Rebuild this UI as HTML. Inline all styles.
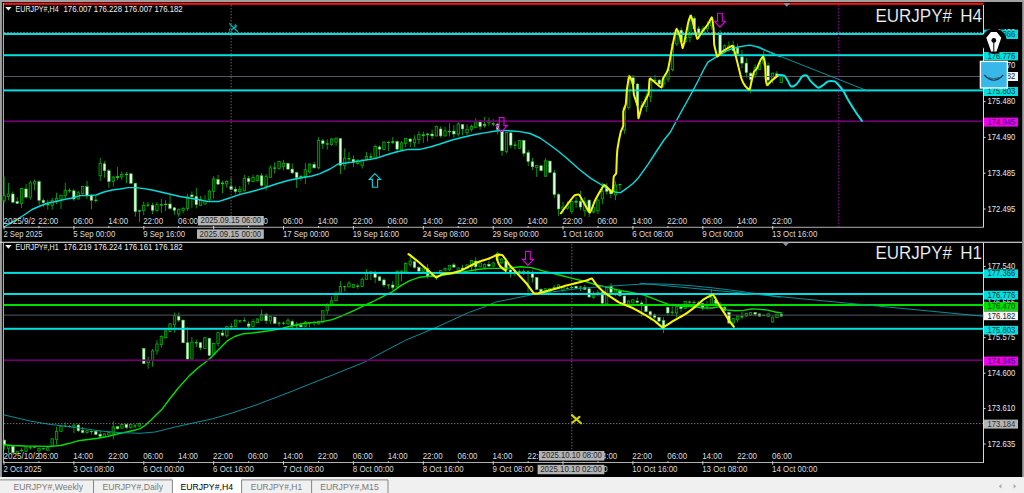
<!DOCTYPE html>
<html><head><meta charset="utf-8"><title>EURJPY# charts</title>
<style>
html,body{margin:0;padding:0;background:#000;width:1024px;height:493px;overflow:hidden}
svg{display:block;font-family:"Liberation Sans", sans-serif;}
text{white-space:pre}
</style></head><body>
<svg width="1024" height="493" viewBox="0 0 1024 493">
<rect x="0" y="0" width="1024" height="493" fill="#000"/>
<rect x="0" y="0" width="1024" height="2" fill="#a0a0a0"/>
<rect x="0" y="0" width="1.9" height="478" fill="#a0a0a0"/>
<rect x="1022.2" y="0" width="2" height="478" fill="#a0a0a0"/>
<rect x="2.9" y="3" width="0.9" height="224.6" fill="#d8d8d8"/>
<rect x="2.9" y="243" width="0.9" height="220" fill="#d8d8d8"/>
<rect x="0" y="241.7" width="1022" height="1.2" fill="#d0d0d0"/>
<rect x="4" y="2.8" width="979.5" height="2" fill="#ff1010"/>
<rect x="3.70" y="176.41" width="0.9" height="26.41" fill="#00a800"/>
<rect x="2.95" y="195.89" width="2.4" height="4.40" fill="#002600" stroke="#00b400" stroke-width="0.75"/>
<rect x="7.97" y="182.94" width="0.9" height="17.35" fill="#00a800"/>
<rect x="7.22" y="194.01" width="2.4" height="2.51" fill="#002600" stroke="#00b400" stroke-width="0.75"/>
<rect x="12.38" y="191.49" width="0.9" height="11.95" fill="#00a800"/>
<rect x="11.53" y="194.01" width="2.6" height="8.17" fill="#dcffdc" stroke="#38c838" stroke-width="0.5"/>
<rect x="16.78" y="197.15" width="0.9" height="6.92" fill="#00a800"/>
<rect x="15.93" y="201.55" width="2.6" height="1.89" fill="#dcffdc" stroke="#38c838" stroke-width="0.5"/>
<rect x="21.18" y="187.72" width="0.9" height="20.12" fill="#00a800"/>
<rect x="20.43" y="188.35" width="2.4" height="15.09" fill="#002600" stroke="#00b400" stroke-width="0.75"/>
<rect x="25.58" y="183.95" width="0.9" height="14.46" fill="#00a800"/>
<rect x="24.73" y="188.98" width="2.6" height="8.17" fill="#dcffdc" stroke="#38c838" stroke-width="0.5"/>
<rect x="29.85" y="180.81" width="0.9" height="18.86" fill="#00a800"/>
<rect x="29.10" y="182.94" width="2.4" height="14.21" fill="#002600" stroke="#00b400" stroke-width="0.75"/>
<rect x="34.13" y="179.55" width="0.9" height="10.69" fill="#00a800"/>
<rect x="33.38" y="181.69" width="2.4" height="2.26" fill="#002600" stroke="#00b400" stroke-width="0.75"/>
<rect x="38.65" y="180.18" width="0.9" height="24.52" fill="#00a800"/>
<rect x="37.80" y="181.69" width="2.6" height="18.61" fill="#dcffdc" stroke="#38c838" stroke-width="0.5"/>
<rect x="42.93" y="198.41" width="0.9" height="8.80" fill="#00a800"/>
<rect x="42.08" y="200.30" width="2.6" height="2.26" fill="#dcffdc" stroke="#38c838" stroke-width="0.5"/>
<rect x="47.33" y="199.67" width="0.9" height="10.06" fill="#00a800"/>
<rect x="46.28" y="203.44" width="3" height="1.89" fill="#20d020"/>
<rect x="51.73" y="197.78" width="0.9" height="11.95" fill="#00a800"/>
<rect x="50.98" y="200.30" width="2.4" height="5.03" fill="#002600" stroke="#00b400" stroke-width="0.75"/>
<rect x="56.13" y="192.75" width="0.9" height="11.32" fill="#00a800"/>
<rect x="55.38" y="198.41" width="2.4" height="2.51" fill="#002600" stroke="#00b400" stroke-width="0.75"/>
<rect x="60.53" y="194.64" width="0.9" height="14.46" fill="#00a800"/>
<rect x="59.78" y="195.27" width="2.4" height="3.77" fill="#002600" stroke="#00b400" stroke-width="0.75"/>
<rect x="64.81" y="182.94" width="0.9" height="15.47" fill="#00a800"/>
<rect x="64.06" y="190.24" width="2.4" height="5.66" fill="#002600" stroke="#00b400" stroke-width="0.75"/>
<rect x="69.08" y="188.35" width="0.9" height="4.40" fill="#00a800"/>
<rect x="68.03" y="190.24" width="3" height="1.01" fill="#20d020"/>
<rect x="73.36" y="188.98" width="0.9" height="11.95" fill="#00a800"/>
<rect x="72.51" y="190.87" width="2.6" height="8.17" fill="#dcffdc" stroke="#38c838" stroke-width="0.5"/>
<rect x="77.76" y="190.87" width="0.9" height="8.80" fill="#00a800"/>
<rect x="77.01" y="192.75" width="2.4" height="6.29" fill="#002600" stroke="#00b400" stroke-width="0.75"/>
<rect x="82.16" y="185.84" width="0.9" height="8.80" fill="#00a800"/>
<rect x="81.41" y="186.46" width="2.4" height="6.92" fill="#002600" stroke="#00b400" stroke-width="0.75"/>
<rect x="86.56" y="180.81" width="0.9" height="18.23" fill="#00a800"/>
<rect x="85.71" y="186.72" width="2.6" height="8.55" fill="#dcffdc" stroke="#38c838" stroke-width="0.5"/>
<rect x="90.96" y="194.01" width="0.9" height="15.09" fill="#00a800"/>
<rect x="90.11" y="195.89" width="2.6" height="4.40" fill="#dcffdc" stroke="#38c838" stroke-width="0.5"/>
<rect x="95.36" y="195.89" width="0.9" height="6.92" fill="#00a800"/>
<rect x="94.31" y="199.67" width="3" height="1.26" fill="#20d020"/>
<rect x="99.76" y="157.80" width="0.9" height="23.01" fill="#00a800"/>
<rect x="99.01" y="163.20" width="2.4" height="12.57" fill="#002600" stroke="#00b400" stroke-width="0.75"/>
<rect x="104.04" y="161.32" width="0.9" height="16.35" fill="#00a800"/>
<rect x="103.19" y="163.83" width="2.6" height="6.92" fill="#dcffdc" stroke="#38c838" stroke-width="0.5"/>
<rect x="108.44" y="168.86" width="0.9" height="18.86" fill="#00a800"/>
<rect x="107.59" y="170.75" width="2.6" height="10.69" fill="#dcffdc" stroke="#38c838" stroke-width="0.5"/>
<rect x="112.84" y="175.78" width="0.9" height="10.69" fill="#00a800"/>
<rect x="112.09" y="177.03" width="2.4" height="4.40" fill="#002600" stroke="#00b400" stroke-width="0.75"/>
<rect x="117.12" y="166.97" width="0.9" height="13.20" fill="#00a800"/>
<rect x="116.07" y="176.15" width="3" height="1.76" fill="#20d020"/>
<rect x="121.27" y="171.38" width="0.9" height="8.80" fill="#00a800"/>
<rect x="120.52" y="174.52" width="2.4" height="2.51" fill="#002600" stroke="#00b400" stroke-width="0.75"/>
<rect x="126.06" y="171.95" width="0.9" height="11.32" fill="#00a800"/>
<rect x="125.01" y="173.83" width="3" height="1.26" fill="#20d020"/>
<rect x="130.47" y="172.57" width="0.9" height="11.32" fill="#00a800"/>
<rect x="129.62" y="173.83" width="2.6" height="9.43" fill="#dcffdc" stroke="#38c838" stroke-width="0.5"/>
<rect x="134.87" y="182.63" width="0.9" height="33.95" fill="#00a800"/>
<rect x="134.02" y="183.26" width="2.6" height="28.29" fill="#dcffdc" stroke="#38c838" stroke-width="0.5"/>
<rect x="139.02" y="209.67" width="0.9" height="12.32" fill="#00a800"/>
<rect x="137.97" y="210.30" width="3" height="1.26" fill="#20d020"/>
<rect x="143.29" y="201.49" width="0.9" height="13.83" fill="#00a800"/>
<rect x="142.54" y="205.27" width="2.4" height="5.03" fill="#002600" stroke="#00b400" stroke-width="0.75"/>
<rect x="147.44" y="202.12" width="0.9" height="5.03" fill="#00a800"/>
<rect x="146.39" y="204.64" width="3" height="1.00" fill="#20d020"/>
<rect x="152.09" y="202.75" width="0.9" height="11.32" fill="#00a800"/>
<rect x="151.24" y="205.27" width="2.6" height="5.03" fill="#dcffdc" stroke="#38c838" stroke-width="0.5"/>
<rect x="156.49" y="202.12" width="0.9" height="10.06" fill="#00a800"/>
<rect x="155.74" y="204.64" width="2.4" height="5.66" fill="#002600" stroke="#00b400" stroke-width="0.75"/>
<rect x="160.89" y="198.98" width="0.9" height="13.83" fill="#00a800"/>
<rect x="159.84" y="204.26" width="3" height="1.26" fill="#20d020"/>
<rect x="165.17" y="200.24" width="0.9" height="10.69" fill="#00a800"/>
<rect x="164.12" y="203.76" width="3" height="1.26" fill="#20d020"/>
<rect x="169.57" y="193.95" width="0.9" height="15.72" fill="#00a800"/>
<rect x="168.72" y="204.01" width="2.6" height="4.40" fill="#dcffdc" stroke="#38c838" stroke-width="0.5"/>
<rect x="173.97" y="207.15" width="0.9" height="7.54" fill="#00a800"/>
<rect x="173.12" y="207.78" width="2.6" height="2.51" fill="#dcffdc" stroke="#38c838" stroke-width="0.5"/>
<rect x="178.25" y="208.41" width="0.9" height="8.17" fill="#00a800"/>
<rect x="177.50" y="209.67" width="2.4" height="4.40" fill="#002600" stroke="#00b400" stroke-width="0.75"/>
<rect x="182.65" y="207.15" width="0.9" height="6.29" fill="#00a800"/>
<rect x="181.90" y="208.41" width="2.4" height="1.89" fill="#002600" stroke="#00b400" stroke-width="0.75"/>
<rect x="187.05" y="193.95" width="0.9" height="16.97" fill="#00a800"/>
<rect x="186.30" y="197.09" width="2.4" height="11.32" fill="#002600" stroke="#00b400" stroke-width="0.75"/>
<rect x="191.45" y="191.43" width="0.9" height="16.35" fill="#00a800"/>
<rect x="190.60" y="194.96" width="2.6" height="1.76" fill="#dcffdc" stroke="#38c838" stroke-width="0.5"/>
<rect x="195.85" y="187.91" width="0.9" height="20.50" fill="#00a800"/>
<rect x="195.00" y="196.46" width="2.6" height="8.17" fill="#dcffdc" stroke="#38c838" stroke-width="0.5"/>
<rect x="200.12" y="195.84" width="0.9" height="10.06" fill="#00a800"/>
<rect x="199.37" y="199.61" width="2.4" height="5.66" fill="#002600" stroke="#00b400" stroke-width="0.75"/>
<rect x="204.53" y="195.21" width="0.9" height="9.43" fill="#00a800"/>
<rect x="203.78" y="200.87" width="2.4" height="3.14" fill="#002600" stroke="#00b400" stroke-width="0.75"/>
<rect x="208.93" y="189.55" width="0.9" height="11.32" fill="#00a800"/>
<rect x="208.18" y="191.18" width="2.4" height="8.42" fill="#002600" stroke="#00b400" stroke-width="0.75"/>
<rect x="213.20" y="176.09" width="0.9" height="22.26" fill="#00a800"/>
<rect x="212.45" y="178.86" width="2.4" height="12.57" fill="#002600" stroke="#00b400" stroke-width="0.75"/>
<rect x="217.60" y="174.84" width="0.9" height="10.31" fill="#00a800"/>
<rect x="216.75" y="179.49" width="2.6" height="4.65" fill="#dcffdc" stroke="#38c838" stroke-width="0.5"/>
<rect x="222.00" y="180.75" width="0.9" height="12.57" fill="#00a800"/>
<rect x="220.95" y="182.63" width="3" height="1.51" fill="#20d020"/>
<rect x="226.28" y="180.12" width="0.9" height="7.54" fill="#00a800"/>
<rect x="225.53" y="181.38" width="2.4" height="2.51" fill="#002600" stroke="#00b400" stroke-width="0.75"/>
<rect x="230.68" y="177.60" width="0.9" height="12.57" fill="#00a800"/>
<rect x="229.83" y="186.66" width="2.6" height="2.89" fill="#dcffdc" stroke="#38c838" stroke-width="0.5"/>
<rect x="234.95" y="186.41" width="0.9" height="7.80" fill="#00a800"/>
<rect x="234.10" y="189.17" width="2.6" height="2.26" fill="#dcffdc" stroke="#38c838" stroke-width="0.5"/>
<rect x="239.36" y="185.78" width="0.9" height="8.42" fill="#00a800"/>
<rect x="238.61" y="189.17" width="2.4" height="2.51" fill="#002600" stroke="#00b400" stroke-width="0.75"/>
<rect x="243.88" y="174.84" width="0.9" height="16.60" fill="#00a800"/>
<rect x="243.13" y="178.23" width="2.4" height="12.57" fill="#002600" stroke="#00b400" stroke-width="0.75"/>
<rect x="248.16" y="176.09" width="0.9" height="8.42" fill="#00a800"/>
<rect x="247.31" y="178.61" width="2.6" height="3.02" fill="#dcffdc" stroke="#38c838" stroke-width="0.5"/>
<rect x="252.58" y="174.75" width="0.9" height="7.54" fill="#00a800"/>
<rect x="251.83" y="177.52" width="2.4" height="4.15" fill="#002600" stroke="#00b400" stroke-width="0.75"/>
<rect x="256.98" y="174.75" width="0.9" height="6.92" fill="#00a800"/>
<rect x="256.23" y="175.76" width="2.4" height="4.65" fill="#002600" stroke="#00b400" stroke-width="0.75"/>
<rect x="261.13" y="172.87" width="0.9" height="13.83" fill="#00a800"/>
<rect x="260.28" y="175.76" width="2.6" height="9.68" fill="#dcffdc" stroke="#38c838" stroke-width="0.5"/>
<rect x="265.66" y="174.12" width="0.9" height="16.35" fill="#00a800"/>
<rect x="264.91" y="176.64" width="2.4" height="9.43" fill="#002600" stroke="#00b400" stroke-width="0.75"/>
<rect x="269.93" y="165.32" width="0.9" height="12.57" fill="#00a800"/>
<rect x="269.18" y="167.84" width="2.4" height="9.43" fill="#002600" stroke="#00b400" stroke-width="0.75"/>
<rect x="274.21" y="162.18" width="0.9" height="11.32" fill="#00a800"/>
<rect x="273.16" y="167.46" width="3" height="1.26" fill="#20d020"/>
<rect x="278.61" y="160.92" width="0.9" height="8.80" fill="#00a800"/>
<rect x="277.86" y="161.55" width="2.4" height="6.92" fill="#002600" stroke="#00b400" stroke-width="0.75"/>
<rect x="283.01" y="159.91" width="0.9" height="10.44" fill="#00a800"/>
<rect x="282.26" y="163.18" width="2.4" height="3.39" fill="#002600" stroke="#00b400" stroke-width="0.75"/>
<rect x="287.53" y="162.81" width="0.9" height="6.92" fill="#00a800"/>
<rect x="286.68" y="163.43" width="2.6" height="5.66" fill="#dcffdc" stroke="#38c838" stroke-width="0.5"/>
<rect x="291.81" y="163.43" width="0.9" height="10.69" fill="#00a800"/>
<rect x="290.96" y="169.09" width="2.6" height="3.77" fill="#dcffdc" stroke="#38c838" stroke-width="0.5"/>
<rect x="296.21" y="171.61" width="0.9" height="16.35" fill="#00a800"/>
<rect x="295.36" y="172.49" width="2.6" height="5.03" fill="#dcffdc" stroke="#38c838" stroke-width="0.5"/>
<rect x="300.49" y="174.75" width="0.9" height="6.29" fill="#00a800"/>
<rect x="299.44" y="176.01" width="3" height="1.51" fill="#20d020"/>
<rect x="304.89" y="162.81" width="0.9" height="21.38" fill="#00a800"/>
<rect x="304.14" y="169.72" width="2.4" height="6.92" fill="#002600" stroke="#00b400" stroke-width="0.75"/>
<rect x="309.16" y="163.43" width="0.9" height="10.06" fill="#00a800"/>
<rect x="308.41" y="164.06" width="2.4" height="7.92" fill="#002600" stroke="#00b400" stroke-width="0.75"/>
<rect x="313.69" y="161.93" width="0.9" height="6.54" fill="#00a800"/>
<rect x="312.84" y="164.44" width="2.6" height="3.39" fill="#dcffdc" stroke="#38c838" stroke-width="0.5"/>
<rect x="318.09" y="137.28" width="0.9" height="31.81" fill="#00a800"/>
<rect x="317.34" y="140.55" width="2.4" height="27.29" fill="#002600" stroke="#00b400" stroke-width="0.75"/>
<rect x="322.36" y="138.92" width="0.9" height="10.06" fill="#00a800"/>
<rect x="321.51" y="140.80" width="2.6" height="2.77" fill="#dcffdc" stroke="#38c838" stroke-width="0.5"/>
<rect x="326.77" y="139.29" width="0.9" height="10.31" fill="#00a800"/>
<rect x="325.72" y="143.32" width="3" height="1.26" fill="#20d020"/>
<rect x="331.17" y="138.04" width="0.9" height="7.80" fill="#00a800"/>
<rect x="330.42" y="138.92" width="2.4" height="5.66" fill="#002600" stroke="#00b400" stroke-width="0.75"/>
<rect x="335.57" y="137.28" width="0.9" height="8.55" fill="#00a800"/>
<rect x="334.82" y="138.29" width="2.4" height="3.77" fill="#002600" stroke="#00b400" stroke-width="0.75"/>
<rect x="339.97" y="138.04" width="0.9" height="36.09" fill="#00a800"/>
<rect x="339.12" y="138.54" width="2.6" height="26.78" fill="#dcffdc" stroke="#38c838" stroke-width="0.5"/>
<rect x="344.24" y="148.35" width="0.9" height="21.38" fill="#00a800"/>
<rect x="343.49" y="158.15" width="2.4" height="7.17" fill="#002600" stroke="#00b400" stroke-width="0.75"/>
<rect x="348.52" y="152.12" width="0.9" height="10.06" fill="#00a800"/>
<rect x="347.47" y="158.15" width="3" height="1.26" fill="#20d020"/>
<rect x="352.92" y="155.26" width="0.9" height="11.95" fill="#00a800"/>
<rect x="352.07" y="159.41" width="2.6" height="2.77" fill="#dcffdc" stroke="#38c838" stroke-width="0.5"/>
<rect x="357.32" y="159.03" width="0.9" height="5.66" fill="#00a800"/>
<rect x="356.57" y="160.29" width="2.4" height="3.14" fill="#002600" stroke="#00b400" stroke-width="0.75"/>
<rect x="361.72" y="159.03" width="0.9" height="9.43" fill="#00a800"/>
<rect x="360.97" y="159.91" width="2.4" height="5.41" fill="#002600" stroke="#00b400" stroke-width="0.75"/>
<rect x="366.00" y="151.87" width="0.9" height="8.05" fill="#00a800"/>
<rect x="365.25" y="156.52" width="2.4" height="2.51" fill="#002600" stroke="#00b400" stroke-width="0.75"/>
<rect x="370.40" y="152.75" width="0.9" height="7.54" fill="#00a800"/>
<rect x="369.35" y="156.14" width="3" height="1.63" fill="#20d020"/>
<rect x="374.69" y="144.69" width="0.9" height="13.20" fill="#00a800"/>
<rect x="373.94" y="146.58" width="2.4" height="10.69" fill="#002600" stroke="#00b400" stroke-width="0.75"/>
<rect x="379.09" y="145.32" width="0.9" height="11.32" fill="#00a800"/>
<rect x="378.24" y="146.96" width="2.6" height="2.14" fill="#dcffdc" stroke="#38c838" stroke-width="0.5"/>
<rect x="383.50" y="141.17" width="0.9" height="9.18" fill="#00a800"/>
<rect x="382.75" y="142.18" width="2.4" height="7.29" fill="#002600" stroke="#00b400" stroke-width="0.75"/>
<rect x="387.90" y="140.92" width="0.9" height="10.06" fill="#00a800"/>
<rect x="386.85" y="141.93" width="3" height="1.00" fill="#20d020"/>
<rect x="392.30" y="137.15" width="0.9" height="6.92" fill="#00a800"/>
<rect x="391.25" y="141.17" width="3" height="1.63" fill="#20d020"/>
<rect x="396.70" y="140.29" width="0.9" height="13.20" fill="#00a800"/>
<rect x="395.85" y="141.55" width="2.6" height="7.54" fill="#dcffdc" stroke="#38c838" stroke-width="0.5"/>
<rect x="401.10" y="141.17" width="0.9" height="9.81" fill="#00a800"/>
<rect x="400.35" y="142.81" width="2.4" height="6.92" fill="#002600" stroke="#00b400" stroke-width="0.75"/>
<rect x="405.25" y="137.78" width="0.9" height="9.43" fill="#00a800"/>
<rect x="404.50" y="138.41" width="2.4" height="5.03" fill="#002600" stroke="#00b400" stroke-width="0.75"/>
<rect x="409.77" y="137.78" width="0.9" height="9.43" fill="#00a800"/>
<rect x="408.92" y="139.03" width="2.6" height="2.51" fill="#dcffdc" stroke="#38c838" stroke-width="0.5"/>
<rect x="414.05" y="135.26" width="0.9" height="11.95" fill="#00a800"/>
<rect x="413.30" y="139.03" width="2.4" height="3.77" fill="#002600" stroke="#00b400" stroke-width="0.75"/>
<rect x="418.45" y="131.49" width="0.9" height="12.57" fill="#00a800"/>
<rect x="417.70" y="134.38" width="2.4" height="5.28" fill="#002600" stroke="#00b400" stroke-width="0.75"/>
<rect x="422.85" y="131.49" width="0.9" height="11.32" fill="#00a800"/>
<rect x="421.80" y="134.38" width="3" height="1.51" fill="#20d020"/>
<rect x="427.13" y="132.75" width="0.9" height="8.80" fill="#00a800"/>
<rect x="426.08" y="133.63" width="3" height="1.63" fill="#20d020"/>
<rect x="431.65" y="129.60" width="0.9" height="9.43" fill="#00a800"/>
<rect x="430.80" y="134.00" width="2.6" height="1.89" fill="#dcffdc" stroke="#38c838" stroke-width="0.5"/>
<rect x="435.93" y="125.58" width="0.9" height="10.94" fill="#00a800"/>
<rect x="435.18" y="126.46" width="2.4" height="9.43" fill="#002600" stroke="#00b400" stroke-width="0.75"/>
<rect x="440.20" y="126.46" width="0.9" height="11.32" fill="#00a800"/>
<rect x="439.35" y="128.97" width="2.6" height="6.92" fill="#dcffdc" stroke="#38c838" stroke-width="0.5"/>
<rect x="444.60" y="126.84" width="0.9" height="9.68" fill="#00a800"/>
<rect x="443.85" y="130.86" width="2.4" height="5.03" fill="#002600" stroke="#00b400" stroke-width="0.75"/>
<rect x="449.01" y="123.32" width="0.9" height="13.20" fill="#00a800"/>
<rect x="447.96" y="130.86" width="3" height="1.26" fill="#20d020"/>
<rect x="453.41" y="125.20" width="0.9" height="12.57" fill="#00a800"/>
<rect x="452.56" y="131.11" width="2.6" height="2.89" fill="#dcffdc" stroke="#38c838" stroke-width="0.5"/>
<rect x="457.81" y="121.05" width="0.9" height="15.47" fill="#00a800"/>
<rect x="457.06" y="123.95" width="2.4" height="10.06" fill="#002600" stroke="#00b400" stroke-width="0.75"/>
<rect x="462.08" y="123.95" width="0.9" height="11.32" fill="#00a800"/>
<rect x="461.23" y="124.57" width="2.6" height="4.40" fill="#dcffdc" stroke="#38c838" stroke-width="0.5"/>
<rect x="466.61" y="124.57" width="0.9" height="10.69" fill="#00a800"/>
<rect x="465.86" y="129.60" width="2.4" height="3.14" fill="#002600" stroke="#00b400" stroke-width="0.75"/>
<rect x="471.01" y="124.57" width="0.9" height="6.92" fill="#00a800"/>
<rect x="470.26" y="126.46" width="2.4" height="3.14" fill="#002600" stroke="#00b400" stroke-width="0.75"/>
<rect x="475.28" y="118.29" width="0.9" height="10.06" fill="#00a800"/>
<rect x="474.53" y="121.81" width="2.4" height="5.53" fill="#002600" stroke="#00b400" stroke-width="0.75"/>
<rect x="479.69" y="119.80" width="0.9" height="9.81" fill="#00a800"/>
<rect x="478.84" y="122.06" width="2.6" height="4.40" fill="#dcffdc" stroke="#38c838" stroke-width="0.5"/>
<rect x="484.09" y="117.03" width="0.9" height="10.69" fill="#00a800"/>
<rect x="483.04" y="123.95" width="3" height="1.89" fill="#20d020"/>
<rect x="488.49" y="117.66" width="0.9" height="8.17" fill="#00a800"/>
<rect x="487.74" y="120.80" width="2.4" height="1.89" fill="#002600" stroke="#00b400" stroke-width="0.75"/>
<rect x="492.76" y="118.92" width="0.9" height="7.54" fill="#00a800"/>
<rect x="491.71" y="123.32" width="3" height="1.26" fill="#20d020"/>
<rect x="497.21" y="123.09" width="0.9" height="11.32" fill="#00a800"/>
<rect x="496.36" y="124.09" width="2.6" height="5.28" fill="#dcffdc" stroke="#38c838" stroke-width="0.5"/>
<rect x="501.61" y="130.38" width="0.9" height="25.40" fill="#00a800"/>
<rect x="500.76" y="131.26" width="2.6" height="19.49" fill="#dcffdc" stroke="#38c838" stroke-width="0.5"/>
<rect x="506.01" y="131.89" width="0.9" height="21.38" fill="#00a800"/>
<rect x="505.26" y="132.52" width="2.4" height="18.86" fill="#002600" stroke="#00b400" stroke-width="0.75"/>
<rect x="510.29" y="131.89" width="0.9" height="16.35" fill="#00a800"/>
<rect x="509.44" y="132.90" width="2.6" height="12.20" fill="#dcffdc" stroke="#38c838" stroke-width="0.5"/>
<rect x="514.56" y="141.32" width="0.9" height="8.17" fill="#00a800"/>
<rect x="513.51" y="144.46" width="3" height="1.26" fill="#20d020"/>
<rect x="518.96" y="140.06" width="0.9" height="8.80" fill="#00a800"/>
<rect x="518.21" y="140.44" width="2.4" height="8.05" fill="#002600" stroke="#00b400" stroke-width="0.75"/>
<rect x="523.36" y="140.06" width="0.9" height="16.35" fill="#00a800"/>
<rect x="522.51" y="140.44" width="2.6" height="12.83" fill="#dcffdc" stroke="#38c838" stroke-width="0.5"/>
<rect x="527.76" y="150.12" width="0.9" height="15.72" fill="#00a800"/>
<rect x="526.91" y="152.64" width="2.6" height="8.80" fill="#dcffdc" stroke="#38c838" stroke-width="0.5"/>
<rect x="532.00" y="158.00" width="0.9" height="11.95" fill="#00a800"/>
<rect x="531.15" y="161.77" width="2.6" height="5.03" fill="#dcffdc" stroke="#38c838" stroke-width="0.5"/>
<rect x="536.27" y="164.92" width="0.9" height="11.95" fill="#00a800"/>
<rect x="535.52" y="165.54" width="2.4" height="1.89" fill="#002600" stroke="#00b400" stroke-width="0.75"/>
<rect x="540.67" y="164.92" width="0.9" height="6.66" fill="#00a800"/>
<rect x="539.82" y="165.80" width="2.6" height="4.78" fill="#dcffdc" stroke="#38c838" stroke-width="0.5"/>
<rect x="545.07" y="158.00" width="0.9" height="18.86" fill="#00a800"/>
<rect x="544.32" y="160.77" width="2.4" height="15.47" fill="#002600" stroke="#00b400" stroke-width="0.75"/>
<rect x="549.48" y="160.51" width="0.9" height="12.57" fill="#00a800"/>
<rect x="548.63" y="161.14" width="2.6" height="11.32" fill="#dcffdc" stroke="#38c838" stroke-width="0.5"/>
<rect x="553.88" y="169.95" width="0.9" height="27.66" fill="#00a800"/>
<rect x="553.03" y="172.84" width="2.6" height="21.63" fill="#dcffdc" stroke="#38c838" stroke-width="0.5"/>
<rect x="558.15" y="193.21" width="0.9" height="22.63" fill="#00a800"/>
<rect x="557.30" y="194.46" width="2.6" height="14.46" fill="#dcffdc" stroke="#38c838" stroke-width="0.5"/>
<rect x="562.55" y="202.01" width="0.9" height="11.32" fill="#00a800"/>
<rect x="561.80" y="207.04" width="2.4" height="2.51" fill="#002600" stroke="#00b400" stroke-width="0.75"/>
<rect x="566.95" y="201.38" width="0.9" height="8.17" fill="#00a800"/>
<rect x="566.20" y="205.78" width="2.4" height="2.51" fill="#002600" stroke="#00b400" stroke-width="0.75"/>
<rect x="571.35" y="200.75" width="0.9" height="13.20" fill="#00a800"/>
<rect x="570.60" y="201.38" width="2.4" height="10.06" fill="#002600" stroke="#00b400" stroke-width="0.75"/>
<rect x="575.63" y="196.98" width="0.9" height="10.69" fill="#00a800"/>
<rect x="574.58" y="200.75" width="3" height="1.89" fill="#20d020"/>
<rect x="580.03" y="190.94" width="0.9" height="19.24" fill="#00a800"/>
<rect x="579.18" y="201.38" width="2.6" height="5.66" fill="#dcffdc" stroke="#38c838" stroke-width="0.5"/>
<rect x="584.43" y="196.98" width="0.9" height="19.49" fill="#00a800"/>
<rect x="583.68" y="202.01" width="2.4" height="8.80" fill="#002600" stroke="#00b400" stroke-width="0.75"/>
<rect x="588.71" y="199.49" width="0.9" height="17.60" fill="#00a800"/>
<rect x="587.86" y="200.12" width="2.6" height="11.95" fill="#dcffdc" stroke="#38c838" stroke-width="0.5"/>
<rect x="593.11" y="206.41" width="0.9" height="6.92" fill="#00a800"/>
<rect x="592.36" y="207.67" width="2.4" height="4.40" fill="#002600" stroke="#00b400" stroke-width="0.75"/>
<rect x="597.51" y="198.87" width="0.9" height="15.09" fill="#00a800"/>
<rect x="596.76" y="200.12" width="2.4" height="10.69" fill="#002600" stroke="#00b400" stroke-width="0.75"/>
<rect x="601.91" y="182.52" width="0.9" height="21.38" fill="#00a800"/>
<rect x="601.16" y="191.32" width="2.4" height="7.54" fill="#002600" stroke="#00b400" stroke-width="0.75"/>
<rect x="606.31" y="183.15" width="0.9" height="11.32" fill="#00a800"/>
<rect x="605.46" y="188.18" width="2.6" height="3.14" fill="#dcffdc" stroke="#38c838" stroke-width="0.5"/>
<rect x="610.46" y="189.43" width="0.9" height="8.80" fill="#00a800"/>
<rect x="609.61" y="191.32" width="2.6" height="2.51" fill="#dcffdc" stroke="#38c838" stroke-width="0.5"/>
<rect x="615.11" y="181.26" width="0.9" height="18.86" fill="#00a800"/>
<rect x="614.36" y="185.03" width="2.4" height="10.06" fill="#002600" stroke="#00b400" stroke-width="0.75"/>
<rect x="619.51" y="183.78" width="0.9" height="6.29" fill="#00a800"/>
<rect x="618.46" y="184.15" width="3" height="1.00" fill="#20d020"/>
<rect x="719.65" y="30.00" width="0.9" height="24.52" fill="#00a800"/>
<rect x="718.80" y="33.78" width="2.6" height="20.12" fill="#dcffdc" stroke="#38c838" stroke-width="0.5"/>
<rect x="724.05" y="44.46" width="0.9" height="6.92" fill="#00a800"/>
<rect x="723.30" y="45.72" width="2.4" height="5.03" fill="#002600" stroke="#00b400" stroke-width="0.75"/>
<rect x="728.45" y="41.32" width="0.9" height="10.69" fill="#00a800"/>
<rect x="727.70" y="45.72" width="2.4" height="3.77" fill="#002600" stroke="#00b400" stroke-width="0.75"/>
<rect x="732.69" y="40.51" width="0.9" height="14.46" fill="#00a800"/>
<rect x="731.84" y="45.54" width="2.6" height="5.03" fill="#dcffdc" stroke="#38c838" stroke-width="0.5"/>
<rect x="737.09" y="43.66" width="0.9" height="10.69" fill="#00a800"/>
<rect x="736.24" y="48.06" width="2.6" height="5.66" fill="#dcffdc" stroke="#38c838" stroke-width="0.5"/>
<rect x="741.50" y="49.95" width="0.9" height="18.23" fill="#00a800"/>
<rect x="740.65" y="56.86" width="2.6" height="6.29" fill="#dcffdc" stroke="#38c838" stroke-width="0.5"/>
<rect x="745.90" y="58.12" width="0.9" height="19.49" fill="#00a800"/>
<rect x="745.05" y="63.15" width="2.6" height="9.43" fill="#dcffdc" stroke="#38c838" stroke-width="0.5"/>
<rect x="750.30" y="71.95" width="0.9" height="21.38" fill="#00a800"/>
<rect x="749.45" y="73.21" width="2.6" height="6.29" fill="#dcffdc" stroke="#38c838" stroke-width="0.5"/>
<rect x="754.70" y="64.41" width="0.9" height="13.83" fill="#00a800"/>
<rect x="753.95" y="67.55" width="2.4" height="6.92" fill="#002600" stroke="#00b400" stroke-width="0.75"/>
<rect x="759.10" y="61.89" width="0.9" height="8.17" fill="#00a800"/>
<rect x="758.35" y="63.15" width="2.4" height="6.29" fill="#002600" stroke="#00b400" stroke-width="0.75"/>
<rect x="763.25" y="50.57" width="0.9" height="15.09" fill="#00a800"/>
<rect x="762.50" y="56.86" width="2.4" height="6.29" fill="#002600" stroke="#00b400" stroke-width="0.75"/>
<rect x="767.65" y="62.52" width="0.9" height="23.89" fill="#00a800"/>
<rect x="766.80" y="65.66" width="2.6" height="14.46" fill="#dcffdc" stroke="#38c838" stroke-width="0.5"/>
<rect x="772.05" y="72.58" width="0.9" height="10.69" fill="#00a800"/>
<rect x="771.30" y="73.21" width="2.4" height="6.29" fill="#002600" stroke="#00b400" stroke-width="0.75"/>
<rect x="776.32" y="71.32" width="0.9" height="5.03" fill="#00a800"/>
<rect x="775.47" y="73.84" width="2.6" height="1.89" fill="#dcffdc" stroke="#38c838" stroke-width="0.5"/>
<rect x="780.85" y="75.72" width="0.9" height="7.54" fill="#00a800"/>
<rect x="780.10" y="76.35" width="2.4" height="6.29" fill="#002600" stroke="#00b400" stroke-width="0.75"/>
<rect x="623.95" y="106.06" width="0.9" height="27.69" fill="#00a800"/>
<rect x="623.20" y="107.32" width="2.4" height="22.68" fill="#002600" stroke="#00b400" stroke-width="0.75"/>
<rect x="628.32" y="74.67" width="0.9" height="34.98" fill="#00a800"/>
<rect x="627.57" y="77.85" width="2.4" height="29.47" fill="#002600" stroke="#00b400" stroke-width="0.75"/>
<rect x="632.69" y="74.81" width="0.9" height="9.89" fill="#00a800"/>
<rect x="631.84" y="77.85" width="2.6" height="6.16" fill="#dcffdc" stroke="#38c838" stroke-width="0.5"/>
<rect x="637.05" y="83.17" width="0.9" height="23.35" fill="#00a800"/>
<rect x="636.20" y="84.01" width="2.6" height="21.55" fill="#dcffdc" stroke="#38c838" stroke-width="0.5"/>
<rect x="641.42" y="100.93" width="0.9" height="6.77" fill="#00a800"/>
<rect x="640.37" y="105.56" width="3" height="1.01" fill="#20d020"/>
<rect x="645.79" y="93.20" width="0.9" height="18.62" fill="#00a800"/>
<rect x="645.04" y="96.84" width="2.4" height="9.74" fill="#002600" stroke="#00b400" stroke-width="0.75"/>
<rect x="650.16" y="77.32" width="0.9" height="24.90" fill="#00a800"/>
<rect x="649.41" y="79.80" width="2.4" height="17.03" fill="#002600" stroke="#00b400" stroke-width="0.75"/>
<rect x="654.53" y="75.01" width="0.9" height="7.05" fill="#00a800"/>
<rect x="653.48" y="79.80" width="3" height="1.00" fill="#20d020"/>
<rect x="658.89" y="79.02" width="0.9" height="7.05" fill="#00a800"/>
<rect x="658.04" y="80.11" width="2.6" height="3.92" fill="#dcffdc" stroke="#38c838" stroke-width="0.5"/>
<rect x="663.26" y="77.55" width="0.9" height="9.89" fill="#00a800"/>
<rect x="662.51" y="78.95" width="2.4" height="5.08" fill="#002600" stroke="#00b400" stroke-width="0.75"/>
<rect x="667.63" y="67.37" width="0.9" height="14.82" fill="#00a800"/>
<rect x="666.88" y="69.73" width="2.4" height="9.22" fill="#002600" stroke="#00b400" stroke-width="0.75"/>
<rect x="672.00" y="43.12" width="0.9" height="28.14" fill="#00a800"/>
<rect x="671.25" y="43.92" width="2.4" height="25.81" fill="#002600" stroke="#00b400" stroke-width="0.75"/>
<rect x="676.37" y="27.66" width="0.9" height="18.33" fill="#00a800"/>
<rect x="675.62" y="30.30" width="2.4" height="13.62" fill="#002600" stroke="#00b400" stroke-width="0.75"/>
<rect x="680.73" y="27.54" width="0.9" height="16.07" fill="#00a800"/>
<rect x="679.88" y="30.30" width="2.6" height="11.30" fill="#dcffdc" stroke="#38c838" stroke-width="0.5"/>
<rect x="685.10" y="33.43" width="0.9" height="9.90" fill="#00a800"/>
<rect x="684.35" y="37.42" width="2.4" height="4.18" fill="#002600" stroke="#00b400" stroke-width="0.75"/>
<rect x="689.47" y="15.22" width="0.9" height="27.08" fill="#00a800"/>
<rect x="688.72" y="18.34" width="2.4" height="19.08" fill="#002600" stroke="#00b400" stroke-width="0.75"/>
<rect x="693.84" y="16.40" width="0.9" height="17.83" fill="#00a800"/>
<rect x="692.99" y="18.34" width="2.6" height="10.49" fill="#dcffdc" stroke="#38c838" stroke-width="0.5"/>
<rect x="698.21" y="26.25" width="0.9" height="12.85" fill="#00a800"/>
<rect x="697.36" y="28.84" width="2.6" height="5.97" fill="#dcffdc" stroke="#38c838" stroke-width="0.5"/>
<rect x="702.57" y="25.96" width="0.9" height="9.54" fill="#00a800"/>
<rect x="701.82" y="28.91" width="2.4" height="5.90" fill="#002600" stroke="#00b400" stroke-width="0.75"/>
<rect x="706.94" y="21.48" width="0.9" height="10.79" fill="#00a800"/>
<rect x="706.19" y="25.80" width="2.4" height="3.10" fill="#002600" stroke="#00b400" stroke-width="0.75"/>
<rect x="711.31" y="17.45" width="0.9" height="12.33" fill="#00a800"/>
<rect x="710.56" y="19.52" width="2.4" height="6.28" fill="#002600" stroke="#00b400" stroke-width="0.75"/>
<rect x="3.95" y="439.49" width="0.9" height="10.06" fill="#00a800"/>
<rect x="3.10" y="440.12" width="2.6" height="5.03" fill="#dcffdc" stroke="#38c838" stroke-width="0.5"/>
<rect x="8.10" y="445.15" width="0.9" height="8.17" fill="#00a800"/>
<rect x="7.35" y="445.78" width="2.4" height="2.51" fill="#002600" stroke="#00b400" stroke-width="0.75"/>
<rect x="12.50" y="445.15" width="0.9" height="8.80" fill="#00a800"/>
<rect x="11.65" y="446.41" width="2.6" height="6.29" fill="#dcffdc" stroke="#38c838" stroke-width="0.5"/>
<rect x="16.78" y="450.81" width="0.9" height="3.14" fill="#00a800"/>
<rect x="16.03" y="451.44" width="2.4" height="1.89" fill="#002600" stroke="#00b400" stroke-width="0.75"/>
<rect x="21.18" y="448.30" width="0.9" height="3.77" fill="#00a800"/>
<rect x="20.13" y="449.80" width="3" height="1.00" fill="#20d020"/>
<rect x="25.58" y="446.41" width="0.9" height="5.66" fill="#00a800"/>
<rect x="24.83" y="447.04" width="2.4" height="4.40" fill="#002600" stroke="#00b400" stroke-width="0.75"/>
<rect x="29.85" y="447.04" width="0.9" height="2.51" fill="#00a800"/>
<rect x="28.80" y="447.29" width="3" height="1.00" fill="#20d020"/>
<rect x="34.13" y="445.78" width="0.9" height="2.51" fill="#00a800"/>
<rect x="33.08" y="446.41" width="3" height="1.26" fill="#20d020"/>
<rect x="38.53" y="447.67" width="0.9" height="5.66" fill="#00a800"/>
<rect x="37.78" y="448.30" width="2.4" height="2.51" fill="#002600" stroke="#00b400" stroke-width="0.75"/>
<rect x="42.93" y="447.67" width="0.9" height="1.89" fill="#00a800"/>
<rect x="41.88" y="448.30" width="3" height="1.00" fill="#20d020"/>
<rect x="47.33" y="447.29" width="0.9" height="3.27" fill="#00a800"/>
<rect x="46.58" y="447.67" width="2.4" height="2.51" fill="#002600" stroke="#00b400" stroke-width="0.75"/>
<rect x="51.73" y="438.24" width="0.9" height="8.80" fill="#00a800"/>
<rect x="50.98" y="438.87" width="2.4" height="7.54" fill="#002600" stroke="#00b400" stroke-width="0.75"/>
<rect x="56.13" y="426.92" width="0.9" height="17.60" fill="#00a800"/>
<rect x="55.38" y="431.32" width="2.4" height="8.17" fill="#002600" stroke="#00b400" stroke-width="0.75"/>
<rect x="60.53" y="425.66" width="0.9" height="6.29" fill="#00a800"/>
<rect x="59.78" y="426.29" width="2.4" height="5.03" fill="#002600" stroke="#00b400" stroke-width="0.75"/>
<rect x="64.81" y="422.52" width="0.9" height="4.40" fill="#00a800"/>
<rect x="63.76" y="425.66" width="3" height="1.00" fill="#20d020"/>
<rect x="69.08" y="425.03" width="0.9" height="2.51" fill="#00a800"/>
<rect x="68.03" y="425.91" width="3" height="1.00" fill="#20d020"/>
<rect x="73.48" y="423.78" width="0.9" height="9.43" fill="#00a800"/>
<rect x="72.73" y="425.03" width="2.4" height="1.89" fill="#002600" stroke="#00b400" stroke-width="0.75"/>
<rect x="77.89" y="423.78" width="0.9" height="8.17" fill="#00a800"/>
<rect x="77.04" y="425.03" width="2.6" height="5.66" fill="#dcffdc" stroke="#38c838" stroke-width="0.5"/>
<rect x="82.16" y="426.92" width="0.9" height="6.29" fill="#00a800"/>
<rect x="81.31" y="430.44" width="2.6" height="2.14" fill="#dcffdc" stroke="#38c838" stroke-width="0.5"/>
<rect x="86.56" y="430.06" width="0.9" height="3.77" fill="#00a800"/>
<rect x="85.81" y="430.69" width="2.4" height="1.89" fill="#002600" stroke="#00b400" stroke-width="0.75"/>
<rect x="90.96" y="430.44" width="0.9" height="4.02" fill="#00a800"/>
<rect x="89.91" y="430.94" width="3" height="1.01" fill="#20d020"/>
<rect x="95.36" y="430.94" width="0.9" height="4.15" fill="#00a800"/>
<rect x="94.51" y="431.32" width="2.6" height="3.14" fill="#dcffdc" stroke="#38c838" stroke-width="0.5"/>
<rect x="99.76" y="430.06" width="0.9" height="6.92" fill="#00a800"/>
<rect x="98.91" y="434.21" width="2.6" height="2.14" fill="#dcffdc" stroke="#38c838" stroke-width="0.5"/>
<rect x="103.91" y="433.46" width="0.9" height="3.77" fill="#00a800"/>
<rect x="103.16" y="433.84" width="2.4" height="3.14" fill="#002600" stroke="#00b400" stroke-width="0.75"/>
<rect x="108.44" y="432.20" width="0.9" height="3.52" fill="#00a800"/>
<rect x="107.69" y="432.58" width="2.4" height="2.51" fill="#002600" stroke="#00b400" stroke-width="0.75"/>
<rect x="112.84" y="421.26" width="0.9" height="18.23" fill="#00a800"/>
<rect x="112.09" y="426.92" width="2.4" height="6.92" fill="#002600" stroke="#00b400" stroke-width="0.75"/>
<rect x="117.12" y="426.29" width="0.9" height="3.14" fill="#00a800"/>
<rect x="116.27" y="426.67" width="2.6" height="2.14" fill="#dcffdc" stroke="#38c838" stroke-width="0.5"/>
<rect x="121.52" y="423.78" width="0.9" height="5.03" fill="#00a800"/>
<rect x="120.77" y="424.41" width="2.4" height="3.77" fill="#002600" stroke="#00b400" stroke-width="0.75"/>
<rect x="125.92" y="423.78" width="0.9" height="5.03" fill="#00a800"/>
<rect x="125.07" y="424.41" width="2.6" height="3.14" fill="#dcffdc" stroke="#38c838" stroke-width="0.5"/>
<rect x="143.29" y="347.78" width="0.9" height="16.35" fill="#00a800"/>
<rect x="142.44" y="348.41" width="2.6" height="15.09" fill="#dcffdc" stroke="#38c838" stroke-width="0.5"/>
<rect x="147.69" y="356.58" width="0.9" height="11.95" fill="#00a800"/>
<rect x="146.94" y="360.35" width="2.4" height="2.51" fill="#002600" stroke="#00b400" stroke-width="0.75"/>
<rect x="152.09" y="349.04" width="0.9" height="17.60" fill="#00a800"/>
<rect x="151.34" y="350.92" width="2.4" height="9.43" fill="#002600" stroke="#00b400" stroke-width="0.75"/>
<rect x="156.49" y="340.24" width="0.9" height="14.46" fill="#00a800"/>
<rect x="155.74" y="344.01" width="2.4" height="6.92" fill="#002600" stroke="#00b400" stroke-width="0.75"/>
<rect x="160.89" y="335.21" width="0.9" height="12.57" fill="#00a800"/>
<rect x="160.14" y="336.46" width="2.4" height="8.17" fill="#002600" stroke="#00b400" stroke-width="0.75"/>
<rect x="165.17" y="330.18" width="0.9" height="8.17" fill="#00a800"/>
<rect x="164.42" y="330.81" width="2.4" height="6.92" fill="#002600" stroke="#00b400" stroke-width="0.75"/>
<rect x="169.57" y="323.26" width="0.9" height="8.80" fill="#00a800"/>
<rect x="168.82" y="323.89" width="2.4" height="7.54" fill="#002600" stroke="#00b400" stroke-width="0.75"/>
<rect x="174.10" y="312.57" width="0.9" height="20.12" fill="#00a800"/>
<rect x="173.35" y="315.72" width="2.4" height="8.80" fill="#002600" stroke="#00b400" stroke-width="0.75"/>
<rect x="178.25" y="312.57" width="0.9" height="9.43" fill="#00a800"/>
<rect x="177.40" y="316.35" width="2.6" height="3.77" fill="#dcffdc" stroke="#38c838" stroke-width="0.5"/>
<rect x="182.65" y="319.49" width="0.9" height="23.89" fill="#00a800"/>
<rect x="181.80" y="320.12" width="2.6" height="22.63" fill="#dcffdc" stroke="#38c838" stroke-width="0.5"/>
<rect x="187.05" y="327.03" width="0.9" height="32.69" fill="#00a800"/>
<rect x="186.20" y="342.75" width="2.6" height="16.35" fill="#dcffdc" stroke="#38c838" stroke-width="0.5"/>
<rect x="191.45" y="337.09" width="0.9" height="23.26" fill="#00a800"/>
<rect x="190.70" y="342.12" width="2.4" height="16.97" fill="#002600" stroke="#00b400" stroke-width="0.75"/>
<rect x="195.85" y="339.61" width="0.9" height="7.54" fill="#00a800"/>
<rect x="194.80" y="342.12" width="3" height="1.26" fill="#20d020"/>
<rect x="200.00" y="342.12" width="0.9" height="8.17" fill="#00a800"/>
<rect x="199.15" y="342.75" width="2.6" height="5.03" fill="#dcffdc" stroke="#38c838" stroke-width="0.5"/>
<rect x="204.40" y="337.09" width="0.9" height="11.95" fill="#00a800"/>
<rect x="203.65" y="337.72" width="2.4" height="10.69" fill="#002600" stroke="#00b400" stroke-width="0.75"/>
<rect x="208.93" y="337.72" width="0.9" height="18.23" fill="#00a800"/>
<rect x="208.08" y="338.35" width="2.6" height="16.97" fill="#dcffdc" stroke="#38c838" stroke-width="0.5"/>
<rect x="213.33" y="342.75" width="0.9" height="12.57" fill="#00a800"/>
<rect x="212.58" y="343.38" width="2.4" height="10.69" fill="#002600" stroke="#00b400" stroke-width="0.75"/>
<rect x="217.60" y="332.06" width="0.9" height="14.46" fill="#00a800"/>
<rect x="216.85" y="332.69" width="2.4" height="10.69" fill="#002600" stroke="#00b400" stroke-width="0.75"/>
<rect x="222.00" y="330.18" width="0.9" height="6.29" fill="#00a800"/>
<rect x="221.15" y="332.94" width="2.6" height="2.26" fill="#dcffdc" stroke="#38c838" stroke-width="0.5"/>
<rect x="226.40" y="325.78" width="0.9" height="11.95" fill="#00a800"/>
<rect x="225.65" y="326.41" width="2.4" height="9.43" fill="#002600" stroke="#00b400" stroke-width="0.75"/>
<rect x="230.81" y="323.26" width="0.9" height="6.92" fill="#00a800"/>
<rect x="229.76" y="326.15" width="3" height="1.01" fill="#20d020"/>
<rect x="235.21" y="319.49" width="0.9" height="7.54" fill="#00a800"/>
<rect x="234.46" y="320.12" width="2.4" height="6.29" fill="#002600" stroke="#00b400" stroke-width="0.75"/>
<rect x="239.48" y="320.12" width="0.9" height="3.14" fill="#00a800"/>
<rect x="238.43" y="320.37" width="3" height="1.00" fill="#20d020"/>
<rect x="243.88" y="317.60" width="0.9" height="4.40" fill="#00a800"/>
<rect x="242.83" y="320.12" width="3" height="1.00" fill="#20d020"/>
<rect x="248.16" y="321.38" width="0.9" height="7.54" fill="#00a800"/>
<rect x="247.31" y="324.52" width="2.6" height="1.89" fill="#dcffdc" stroke="#38c838" stroke-width="0.5"/>
<rect x="248.18" y="323.33" width="0.9" height="3.14" fill="#00a800"/>
<rect x="247.33" y="323.95" width="2.6" height="1.89" fill="#dcffdc" stroke="#38c838" stroke-width="0.5"/>
<rect x="252.58" y="318.92" width="0.9" height="8.17" fill="#00a800"/>
<rect x="251.83" y="321.44" width="2.4" height="5.03" fill="#002600" stroke="#00b400" stroke-width="0.75"/>
<rect x="256.98" y="318.30" width="0.9" height="5.03" fill="#00a800"/>
<rect x="256.23" y="318.92" width="2.4" height="3.77" fill="#002600" stroke="#00b400" stroke-width="0.75"/>
<rect x="261.13" y="309.49" width="0.9" height="11.32" fill="#00a800"/>
<rect x="260.38" y="314.52" width="2.4" height="5.66" fill="#002600" stroke="#00b400" stroke-width="0.75"/>
<rect x="265.66" y="312.64" width="0.9" height="11.32" fill="#00a800"/>
<rect x="264.81" y="314.52" width="2.6" height="6.29" fill="#dcffdc" stroke="#38c838" stroke-width="0.5"/>
<rect x="269.93" y="315.78" width="0.9" height="8.17" fill="#00a800"/>
<rect x="269.18" y="316.41" width="2.4" height="4.40" fill="#002600" stroke="#00b400" stroke-width="0.75"/>
<rect x="274.33" y="316.41" width="0.9" height="7.54" fill="#00a800"/>
<rect x="273.48" y="317.04" width="2.6" height="6.29" fill="#dcffdc" stroke="#38c838" stroke-width="0.5"/>
<rect x="278.61" y="321.44" width="0.9" height="5.03" fill="#00a800"/>
<rect x="277.56" y="322.70" width="3" height="1.00" fill="#20d020"/>
<rect x="283.01" y="321.44" width="0.9" height="3.77" fill="#00a800"/>
<rect x="281.96" y="322.70" width="3" height="1.00" fill="#20d020"/>
<rect x="287.53" y="318.30" width="0.9" height="6.29" fill="#00a800"/>
<rect x="286.78" y="320.18" width="2.4" height="3.77" fill="#002600" stroke="#00b400" stroke-width="0.75"/>
<rect x="291.81" y="319.55" width="0.9" height="10.06" fill="#00a800"/>
<rect x="290.96" y="321.44" width="2.6" height="4.40" fill="#dcffdc" stroke="#38c838" stroke-width="0.5"/>
<rect x="296.21" y="322.07" width="0.9" height="6.29" fill="#00a800"/>
<rect x="295.16" y="325.21" width="3" height="1.00" fill="#20d020"/>
<rect x="300.49" y="323.33" width="0.9" height="3.77" fill="#00a800"/>
<rect x="299.64" y="325.21" width="2.6" height="1.63" fill="#dcffdc" stroke="#38c838" stroke-width="0.5"/>
<rect x="304.89" y="320.81" width="0.9" height="6.29" fill="#00a800"/>
<rect x="304.14" y="322.07" width="2.4" height="4.40" fill="#002600" stroke="#00b400" stroke-width="0.75"/>
<rect x="309.16" y="322.07" width="0.9" height="5.03" fill="#00a800"/>
<rect x="308.11" y="322.32" width="3" height="1.00" fill="#20d020"/>
<rect x="313.69" y="320.81" width="0.9" height="5.03" fill="#00a800"/>
<rect x="312.64" y="322.07" width="3" height="1.00" fill="#20d020"/>
<rect x="318.09" y="320.81" width="0.9" height="3.77" fill="#00a800"/>
<rect x="317.34" y="321.44" width="2.4" height="2.51" fill="#002600" stroke="#00b400" stroke-width="0.75"/>
<rect x="322.36" y="310.12" width="0.9" height="13.20" fill="#00a800"/>
<rect x="321.61" y="310.75" width="2.4" height="11.32" fill="#002600" stroke="#00b400" stroke-width="0.75"/>
<rect x="326.77" y="303.21" width="0.9" height="11.32" fill="#00a800"/>
<rect x="326.02" y="305.09" width="2.4" height="5.66" fill="#002600" stroke="#00b400" stroke-width="0.75"/>
<rect x="331.17" y="296.29" width="0.9" height="10.06" fill="#00a800"/>
<rect x="330.42" y="300.69" width="2.4" height="4.40" fill="#002600" stroke="#00b400" stroke-width="0.75"/>
<rect x="335.57" y="291.26" width="0.9" height="10.06" fill="#00a800"/>
<rect x="334.82" y="294.41" width="2.4" height="6.29" fill="#002600" stroke="#00b400" stroke-width="0.75"/>
<rect x="339.97" y="281.20" width="0.9" height="13.83" fill="#00a800"/>
<rect x="339.22" y="286.61" width="2.4" height="7.80" fill="#002600" stroke="#00b400" stroke-width="0.75"/>
<rect x="344.24" y="285.60" width="0.9" height="5.66" fill="#00a800"/>
<rect x="343.19" y="286.23" width="3" height="1.00" fill="#20d020"/>
<rect x="348.52" y="281.20" width="0.9" height="6.29" fill="#00a800"/>
<rect x="347.77" y="283.09" width="2.4" height="3.77" fill="#002600" stroke="#00b400" stroke-width="0.75"/>
<rect x="352.92" y="283.72" width="0.9" height="4.15" fill="#00a800"/>
<rect x="352.17" y="284.35" width="2.4" height="3.14" fill="#002600" stroke="#00b400" stroke-width="0.75"/>
<rect x="357.32" y="283.72" width="0.9" height="5.03" fill="#00a800"/>
<rect x="356.27" y="285.60" width="3" height="1.26" fill="#20d020"/>
<rect x="361.72" y="277.43" width="0.9" height="9.43" fill="#00a800"/>
<rect x="360.97" y="279.32" width="2.4" height="7.29" fill="#002600" stroke="#00b400" stroke-width="0.75"/>
<rect x="366.00" y="269.26" width="0.9" height="10.69" fill="#00a800"/>
<rect x="365.25" y="273.03" width="2.4" height="6.29" fill="#002600" stroke="#00b400" stroke-width="0.75"/>
<rect x="370.40" y="271.14" width="0.9" height="8.80" fill="#00a800"/>
<rect x="369.65" y="271.77" width="2.4" height="1.89" fill="#002600" stroke="#00b400" stroke-width="0.75"/>
<rect x="374.69" y="270.52" width="0.9" height="12.57" fill="#00a800"/>
<rect x="373.84" y="272.41" width="2.6" height="5.03" fill="#dcffdc" stroke="#38c838" stroke-width="0.5"/>
<rect x="379.09" y="276.18" width="0.9" height="5.03" fill="#00a800"/>
<rect x="378.24" y="276.81" width="2.6" height="3.77" fill="#dcffdc" stroke="#38c838" stroke-width="0.5"/>
<rect x="383.50" y="278.06" width="0.9" height="9.43" fill="#00a800"/>
<rect x="382.65" y="279.95" width="2.6" height="5.03" fill="#dcffdc" stroke="#38c838" stroke-width="0.5"/>
<rect x="387.90" y="284.35" width="0.9" height="4.40" fill="#00a800"/>
<rect x="386.85" y="284.60" width="3" height="1.00" fill="#20d020"/>
<rect x="392.30" y="281.21" width="0.9" height="8.80" fill="#00a800"/>
<rect x="391.45" y="284.98" width="2.6" height="2.51" fill="#dcffdc" stroke="#38c838" stroke-width="0.5"/>
<rect x="396.70" y="270.52" width="0.9" height="17.60" fill="#00a800"/>
<rect x="395.95" y="271.15" width="2.4" height="15.72" fill="#002600" stroke="#00b400" stroke-width="0.75"/>
<rect x="401.10" y="269.89" width="0.9" height="11.32" fill="#00a800"/>
<rect x="400.35" y="271.15" width="2.4" height="1.26" fill="#002600" stroke="#00b400" stroke-width="0.75"/>
<rect x="405.25" y="262.35" width="0.9" height="10.06" fill="#00a800"/>
<rect x="404.50" y="263.60" width="2.4" height="8.17" fill="#002600" stroke="#00b400" stroke-width="0.75"/>
<rect x="409.77" y="256.69" width="0.9" height="10.06" fill="#00a800"/>
<rect x="409.02" y="261.09" width="2.4" height="3.14" fill="#002600" stroke="#00b400" stroke-width="0.75"/>
<rect x="414.05" y="260.46" width="0.9" height="8.17" fill="#00a800"/>
<rect x="413.20" y="261.72" width="2.6" height="5.66" fill="#dcffdc" stroke="#38c838" stroke-width="0.5"/>
<rect x="418.45" y="266.12" width="0.9" height="5.66" fill="#00a800"/>
<rect x="417.60" y="267.38" width="2.6" height="3.77" fill="#dcffdc" stroke="#38c838" stroke-width="0.5"/>
<rect x="422.85" y="267.38" width="0.9" height="4.40" fill="#00a800"/>
<rect x="422.10" y="268.00" width="2.4" height="3.14" fill="#002600" stroke="#00b400" stroke-width="0.75"/>
<rect x="427.13" y="264.23" width="0.9" height="14.46" fill="#00a800"/>
<rect x="426.28" y="268.63" width="2.6" height="7.54" fill="#dcffdc" stroke="#38c838" stroke-width="0.5"/>
<rect x="431.65" y="273.03" width="0.9" height="4.40" fill="#00a800"/>
<rect x="430.60" y="274.67" width="3" height="1.00" fill="#20d020"/>
<rect x="435.93" y="275.55" width="0.9" height="4.40" fill="#00a800"/>
<rect x="434.88" y="277.18" width="3" height="1.00" fill="#20d020"/>
<rect x="440.20" y="269.89" width="0.9" height="4.40" fill="#00a800"/>
<rect x="439.45" y="270.52" width="2.4" height="2.51" fill="#002600" stroke="#00b400" stroke-width="0.75"/>
<rect x="444.60" y="267.38" width="0.9" height="3.77" fill="#00a800"/>
<rect x="443.85" y="268.63" width="2.4" height="1.26" fill="#002600" stroke="#00b400" stroke-width="0.75"/>
<rect x="449.01" y="264.86" width="0.9" height="6.29" fill="#00a800"/>
<rect x="448.26" y="265.49" width="2.4" height="4.40" fill="#002600" stroke="#00b400" stroke-width="0.75"/>
<rect x="453.41" y="262.97" width="0.9" height="5.03" fill="#00a800"/>
<rect x="452.56" y="264.86" width="2.6" height="2.26" fill="#dcffdc" stroke="#38c838" stroke-width="0.5"/>
<rect x="457.81" y="267.38" width="0.9" height="5.66" fill="#00a800"/>
<rect x="457.06" y="268.00" width="2.4" height="3.14" fill="#002600" stroke="#00b400" stroke-width="0.75"/>
<rect x="462.08" y="264.86" width="0.9" height="5.66" fill="#00a800"/>
<rect x="461.23" y="268.00" width="2.6" height="1.89" fill="#dcffdc" stroke="#38c838" stroke-width="0.5"/>
<rect x="466.61" y="264.23" width="0.9" height="5.03" fill="#00a800"/>
<rect x="465.86" y="264.86" width="2.4" height="3.77" fill="#002600" stroke="#00b400" stroke-width="0.75"/>
<rect x="471.01" y="259.83" width="0.9" height="11.32" fill="#00a800"/>
<rect x="470.26" y="260.46" width="2.4" height="6.29" fill="#002600" stroke="#00b400" stroke-width="0.75"/>
<rect x="475.28" y="257.32" width="0.9" height="14.46" fill="#00a800"/>
<rect x="474.43" y="261.09" width="2.6" height="5.66" fill="#dcffdc" stroke="#38c838" stroke-width="0.5"/>
<rect x="479.69" y="262.35" width="0.9" height="5.03" fill="#00a800"/>
<rect x="478.94" y="262.97" width="2.4" height="3.77" fill="#002600" stroke="#00b400" stroke-width="0.75"/>
<rect x="484.09" y="263.60" width="0.9" height="4.40" fill="#00a800"/>
<rect x="483.34" y="264.23" width="2.4" height="3.14" fill="#002600" stroke="#00b400" stroke-width="0.75"/>
<rect x="488.49" y="261.09" width="0.9" height="5.66" fill="#00a800"/>
<rect x="487.64" y="264.23" width="2.6" height="1.89" fill="#dcffdc" stroke="#38c838" stroke-width="0.5"/>
<rect x="492.76" y="261.72" width="0.9" height="5.03" fill="#00a800"/>
<rect x="492.01" y="262.97" width="2.4" height="3.14" fill="#002600" stroke="#00b400" stroke-width="0.75"/>
<rect x="497.16" y="251.66" width="0.9" height="9.43" fill="#00a800"/>
<rect x="496.41" y="253.54" width="2.4" height="6.29" fill="#002600" stroke="#00b400" stroke-width="0.75"/>
<rect x="501.21" y="257.95" width="0.9" height="5.66" fill="#00a800"/>
<rect x="500.46" y="259.20" width="2.4" height="3.77" fill="#002600" stroke="#00b400" stroke-width="0.75"/>
<rect x="505.61" y="257.95" width="0.9" height="13.20" fill="#00a800"/>
<rect x="504.76" y="261.09" width="2.6" height="8.80" fill="#dcffdc" stroke="#38c838" stroke-width="0.5"/>
<rect x="510.01" y="269.26" width="0.9" height="8.17" fill="#00a800"/>
<rect x="509.16" y="269.89" width="2.6" height="2.51" fill="#dcffdc" stroke="#38c838" stroke-width="0.5"/>
<rect x="514.41" y="271.15" width="0.9" height="5.03" fill="#00a800"/>
<rect x="513.36" y="272.66" width="3" height="1.00" fill="#20d020"/>
<rect x="518.81" y="269.26" width="0.9" height="3.77" fill="#00a800"/>
<rect x="517.76" y="270.90" width="3" height="1.00" fill="#20d020"/>
<rect x="523.21" y="269.26" width="0.9" height="5.66" fill="#00a800"/>
<rect x="522.16" y="271.15" width="3" height="1.00" fill="#20d020"/>
<rect x="527.61" y="269.89" width="0.9" height="22.63" fill="#00a800"/>
<rect x="526.76" y="271.78" width="2.6" height="1.26" fill="#dcffdc" stroke="#38c838" stroke-width="0.5"/>
<rect x="532.01" y="270.52" width="0.9" height="11.95" fill="#00a800"/>
<rect x="531.16" y="273.03" width="2.6" height="4.40" fill="#dcffdc" stroke="#38c838" stroke-width="0.5"/>
<rect x="536.29" y="276.81" width="0.9" height="13.20" fill="#00a800"/>
<rect x="535.44" y="277.43" width="2.6" height="11.95" fill="#dcffdc" stroke="#38c838" stroke-width="0.5"/>
<rect x="540.56" y="288.12" width="0.9" height="4.40" fill="#00a800"/>
<rect x="539.71" y="289.38" width="2.6" height="2.51" fill="#dcffdc" stroke="#38c838" stroke-width="0.5"/>
<rect x="544.97" y="288.12" width="0.9" height="3.77" fill="#00a800"/>
<rect x="544.22" y="288.75" width="2.4" height="2.51" fill="#002600" stroke="#00b400" stroke-width="0.75"/>
<rect x="549.37" y="288.12" width="0.9" height="3.77" fill="#00a800"/>
<rect x="548.62" y="288.75" width="2.4" height="2.51" fill="#002600" stroke="#00b400" stroke-width="0.75"/>
<rect x="553.64" y="284.98" width="0.9" height="5.03" fill="#00a800"/>
<rect x="552.59" y="287.24" width="3" height="1.00" fill="#20d020"/>
<rect x="558.04" y="284.35" width="0.9" height="4.40" fill="#00a800"/>
<rect x="557.29" y="284.98" width="2.4" height="3.14" fill="#002600" stroke="#00b400" stroke-width="0.75"/>
<rect x="562.44" y="286.87" width="0.9" height="5.03" fill="#00a800"/>
<rect x="561.69" y="287.49" width="2.4" height="2.51" fill="#002600" stroke="#00b400" stroke-width="0.75"/>
<rect x="566.84" y="286.87" width="0.9" height="2.51" fill="#00a800"/>
<rect x="565.79" y="287.87" width="3" height="1.00" fill="#20d020"/>
<rect x="571.24" y="285.98" width="0.9" height="3.39" fill="#00a800"/>
<rect x="570.19" y="286.99" width="3" height="1.00" fill="#20d020"/>
<rect x="575.65" y="285.61" width="0.9" height="3.14" fill="#00a800"/>
<rect x="574.80" y="286.24" width="2.6" height="1.89" fill="#dcffdc" stroke="#38c838" stroke-width="0.5"/>
<rect x="580.05" y="286.24" width="0.9" height="5.03" fill="#00a800"/>
<rect x="579.00" y="286.49" width="3" height="1.00" fill="#20d020"/>
<rect x="584.32" y="284.98" width="0.9" height="5.03" fill="#00a800"/>
<rect x="583.47" y="287.49" width="2.6" height="1.89" fill="#dcffdc" stroke="#38c838" stroke-width="0.5"/>
<rect x="588.72" y="288.12" width="0.9" height="10.06" fill="#00a800"/>
<rect x="587.87" y="288.75" width="2.6" height="8.17" fill="#dcffdc" stroke="#38c838" stroke-width="0.5"/>
<rect x="593.12" y="291.27" width="0.9" height="7.54" fill="#00a800"/>
<rect x="592.37" y="293.78" width="2.4" height="3.77" fill="#002600" stroke="#00b400" stroke-width="0.75"/>
<rect x="597.40" y="290.01" width="0.9" height="6.29" fill="#00a800"/>
<rect x="596.65" y="292.52" width="2.4" height="1.89" fill="#002600" stroke="#00b400" stroke-width="0.75"/>
<rect x="601.92" y="291.89" width="0.9" height="14.46" fill="#00a800"/>
<rect x="601.07" y="292.52" width="2.6" height="10.69" fill="#dcffdc" stroke="#38c838" stroke-width="0.5"/>
<rect x="606.20" y="286.24" width="0.9" height="18.86" fill="#00a800"/>
<rect x="605.45" y="287.49" width="2.4" height="16.35" fill="#002600" stroke="#00b400" stroke-width="0.75"/>
<rect x="610.60" y="283.09" width="0.9" height="10.06" fill="#00a800"/>
<rect x="609.75" y="286.24" width="2.6" height="6.29" fill="#dcffdc" stroke="#38c838" stroke-width="0.5"/>
<rect x="615.00" y="289.38" width="0.9" height="6.92" fill="#00a800"/>
<rect x="614.25" y="290.01" width="2.4" height="4.40" fill="#002600" stroke="#00b400" stroke-width="0.75"/>
<rect x="619.40" y="290.64" width="0.9" height="6.29" fill="#00a800"/>
<rect x="618.55" y="291.27" width="2.6" height="4.40" fill="#dcffdc" stroke="#38c838" stroke-width="0.5"/>
<rect x="619.55" y="290.97" width="0.9" height="5.03" fill="#00a800"/>
<rect x="618.70" y="291.60" width="2.6" height="3.77" fill="#dcffdc" stroke="#38c838" stroke-width="0.5"/>
<rect x="623.95" y="295.38" width="0.9" height="8.80" fill="#00a800"/>
<rect x="623.10" y="296.00" width="2.6" height="7.54" fill="#dcffdc" stroke="#38c838" stroke-width="0.5"/>
<rect x="628.10" y="300.41" width="0.9" height="4.40" fill="#00a800"/>
<rect x="627.35" y="301.03" width="2.4" height="3.14" fill="#002600" stroke="#00b400" stroke-width="0.75"/>
<rect x="632.38" y="299.15" width="0.9" height="4.40" fill="#00a800"/>
<rect x="631.63" y="299.78" width="2.4" height="3.14" fill="#002600" stroke="#00b400" stroke-width="0.75"/>
<rect x="636.78" y="297.26" width="0.9" height="6.29" fill="#00a800"/>
<rect x="635.93" y="301.03" width="2.6" height="1.26" fill="#dcffdc" stroke="#38c838" stroke-width="0.5"/>
<rect x="641.18" y="300.41" width="0.9" height="16.35" fill="#00a800"/>
<rect x="640.33" y="302.92" width="2.6" height="1.89" fill="#dcffdc" stroke="#38c838" stroke-width="0.5"/>
<rect x="645.58" y="296.00" width="0.9" height="16.35" fill="#00a800"/>
<rect x="644.73" y="305.43" width="2.6" height="6.29" fill="#dcffdc" stroke="#38c838" stroke-width="0.5"/>
<rect x="649.85" y="310.46" width="0.9" height="10.06" fill="#00a800"/>
<rect x="649.00" y="311.72" width="2.6" height="3.77" fill="#dcffdc" stroke="#38c838" stroke-width="0.5"/>
<rect x="654.13" y="313.61" width="0.9" height="5.66" fill="#00a800"/>
<rect x="653.28" y="314.87" width="2.6" height="2.51" fill="#dcffdc" stroke="#38c838" stroke-width="0.5"/>
<rect x="658.53" y="316.75" width="0.9" height="5.66" fill="#00a800"/>
<rect x="657.68" y="317.38" width="2.6" height="3.77" fill="#dcffdc" stroke="#38c838" stroke-width="0.5"/>
<rect x="663.06" y="317.38" width="0.9" height="15.72" fill="#00a800"/>
<rect x="662.21" y="320.52" width="2.6" height="6.29" fill="#dcffdc" stroke="#38c838" stroke-width="0.5"/>
<rect x="667.33" y="306.69" width="0.9" height="8.17" fill="#00a800"/>
<rect x="666.48" y="307.32" width="2.6" height="5.66" fill="#dcffdc" stroke="#38c838" stroke-width="0.5"/>
<rect x="671.73" y="303.55" width="0.9" height="11.95" fill="#00a800"/>
<rect x="670.68" y="311.72" width="3" height="1.00" fill="#20d020"/>
<rect x="676.13" y="306.06" width="0.9" height="11.32" fill="#00a800"/>
<rect x="675.38" y="306.69" width="2.4" height="6.29" fill="#002600" stroke="#00b400" stroke-width="0.75"/>
<rect x="680.53" y="306.06" width="0.9" height="5.66" fill="#00a800"/>
<rect x="679.68" y="306.94" width="2.6" height="1.63" fill="#dcffdc" stroke="#38c838" stroke-width="0.5"/>
<rect x="684.81" y="301.03" width="0.9" height="8.17" fill="#00a800"/>
<rect x="684.06" y="301.41" width="2.4" height="7.17" fill="#002600" stroke="#00b400" stroke-width="0.75"/>
<rect x="689.08" y="300.41" width="0.9" height="3.14" fill="#00a800"/>
<rect x="688.03" y="301.66" width="3" height="1.01" fill="#20d020"/>
<rect x="693.48" y="300.41" width="0.9" height="3.77" fill="#00a800"/>
<rect x="692.43" y="301.91" width="3" height="1.00" fill="#20d020"/>
<rect x="697.89" y="301.03" width="0.9" height="3.77" fill="#00a800"/>
<rect x="696.84" y="302.67" width="3" height="1.00" fill="#20d020"/>
<rect x="702.16" y="302.92" width="0.9" height="7.54" fill="#00a800"/>
<rect x="701.31" y="303.55" width="2.6" height="4.40" fill="#dcffdc" stroke="#38c838" stroke-width="0.5"/>
<rect x="706.56" y="301.03" width="0.9" height="8.80" fill="#00a800"/>
<rect x="705.51" y="305.43" width="3" height="1.00" fill="#20d020"/>
<rect x="710.96" y="289.09" width="0.9" height="16.35" fill="#00a800"/>
<rect x="710.21" y="297.26" width="2.4" height="7.54" fill="#002600" stroke="#00b400" stroke-width="0.75"/>
<rect x="715.36" y="296.63" width="0.9" height="9.43" fill="#00a800"/>
<rect x="714.51" y="300.41" width="2.6" height="3.14" fill="#dcffdc" stroke="#38c838" stroke-width="0.5"/>
<rect x="719.76" y="302.29" width="0.9" height="5.66" fill="#00a800"/>
<rect x="718.71" y="304.81" width="3" height="1.26" fill="#20d020"/>
<rect x="724.16" y="306.06" width="0.9" height="5.66" fill="#00a800"/>
<rect x="723.31" y="307.32" width="2.6" height="3.14" fill="#dcffdc" stroke="#38c838" stroke-width="0.5"/>
<rect x="728.57" y="311.72" width="0.9" height="12.57" fill="#00a800"/>
<rect x="727.72" y="312.35" width="2.6" height="10.69" fill="#dcffdc" stroke="#38c838" stroke-width="0.5"/>
<rect x="732.84" y="318.01" width="0.9" height="5.66" fill="#00a800"/>
<rect x="732.09" y="318.64" width="2.4" height="4.40" fill="#002600" stroke="#00b400" stroke-width="0.75"/>
<rect x="737.12" y="315.49" width="0.9" height="6.92" fill="#00a800"/>
<rect x="736.37" y="316.12" width="2.4" height="3.77" fill="#002600" stroke="#00b400" stroke-width="0.75"/>
<rect x="741.52" y="311.72" width="0.9" height="7.54" fill="#00a800"/>
<rect x="740.47" y="316.12" width="3" height="1.26" fill="#20d020"/>
<rect x="745.92" y="312.98" width="0.9" height="3.77" fill="#00a800"/>
<rect x="745.17" y="313.61" width="2.4" height="2.51" fill="#002600" stroke="#00b400" stroke-width="0.75"/>
<rect x="750.10" y="312.38" width="0.9" height="3.39" fill="#00a800"/>
<rect x="749.35" y="312.63" width="2.4" height="2.51" fill="#002600" stroke="#00b400" stroke-width="0.75"/>
<rect x="754.76" y="312.00" width="0.9" height="4.40" fill="#00a800"/>
<rect x="753.91" y="312.38" width="2.6" height="1.76" fill="#dcffdc" stroke="#38c838" stroke-width="0.5"/>
<rect x="759.03" y="313.64" width="0.9" height="2.77" fill="#00a800"/>
<rect x="758.18" y="313.89" width="2.6" height="2.26" fill="#dcffdc" stroke="#38c838" stroke-width="0.5"/>
<rect x="763.31" y="314.52" width="0.9" height="1.63" fill="#00a800"/>
<rect x="762.26" y="314.90" width="3" height="1.01" fill="#20d020"/>
<rect x="767.83" y="313.64" width="0.9" height="3.02" fill="#00a800"/>
<rect x="767.08" y="313.89" width="2.4" height="2.51" fill="#002600" stroke="#00b400" stroke-width="0.75"/>
<rect x="772.11" y="316.66" width="0.9" height="5.78" fill="#00a800"/>
<rect x="771.36" y="317.03" width="2.4" height="5.03" fill="#002600" stroke="#00b400" stroke-width="0.75"/>
<rect x="776.51" y="313.89" width="0.9" height="4.02" fill="#00a800"/>
<rect x="775.76" y="314.14" width="2.4" height="3.52" fill="#002600" stroke="#00b400" stroke-width="0.75"/>
<rect x="780.91" y="313.89" width="0.9" height="2.51" fill="#00a800"/>
<rect x="780.06" y="314.14" width="2.6" height="2.01" fill="#dcffdc" stroke="#38c838" stroke-width="0.5"/>
<rect x="130.30" y="423.75" width="0.9" height="5.00" fill="#00a800"/>
<rect x="129.55" y="424.50" width="2.4" height="3.00" fill="#002600" stroke="#00b400" stroke-width="0.75"/>
<rect x="134.55" y="424.00" width="0.9" height="4.00" fill="#00a800"/>
<rect x="133.50" y="425.50" width="3" height="1.00" fill="#20d020"/>
<rect x="138.80" y="422.50" width="0.9" height="4.50" fill="#00a800"/>
<rect x="138.05" y="423.50" width="2.4" height="2.50" fill="#002600" stroke="#00b400" stroke-width="0.75"/>
<path d="M4.0 227.0 L8.0 224.5 L16.0 220.0 L24.0 215.0 L32.0 209.5 L40.0 206.0 L48.0 203.0 L56.0 201.5 L64.0 199.5 L72.0 198.0 L80.0 195.6 L88.0 195.6 L96.0 195.0 L104.0 192.0 L112.0 190.0 L120.0 189.0 L128.0 187.6 L136.0 187.6 L144.0 188.6 L152.0 190.0 L165.0 193.0 L180.0 196.5 L195.0 199.0 L207.0 201.4 L219.0 201.4 L228.0 198.5 L240.0 194.4 L252.0 191.5 L264.0 188.0 L276.0 184.0 L288.0 180.5 L300.0 178.0 L312.0 176.0 L320.0 173.6 L330.0 169.0 L338.0 164.0 L346.0 163.0 L356.0 161.6 L366.0 160.0 L376.0 158.4 L386.0 155.0 L396.0 152.0 L408.0 149.4 L420.0 149.4 L430.0 147.0 L440.0 144.0 L452.0 140.0 L464.0 137.0 L475.0 134.5 L486.0 132.6 L496.0 131.0 L504.0 130.4 L512.0 131.0 L520.0 131.6 L530.0 133.5 L540.0 138.0 L550.0 145.0 L558.0 151.0 L566.5 158.0 L579.1 169.3 L590.4 178.1 L601.7 185.0 L608.0 188.8 L615.6 192.2 L620.6 192.6 L626.9 188.2 L633.2 183.2 L638.2 178.1 L648.0 164.3 L656.0 152.0 L664.0 140.0 L670.4 132.0 L680.0 114.0 L690.0 96.0 L698.0 81.0 L703.5 70.0 L707.9 62.1 L718.0 55.8 L728.0 50.1 L738.1 47.0 L749.4 45.1 L758.2 47.0 L768.0 51.4 L780.3 56.6" fill="none" stroke="#00dcdc" stroke-width="1.45" stroke-linejoin="round" stroke-linecap="round"/>
<path d="M4.4 444.8 L12.6 445.5 L25.0 446.0 L50.3 446.4 L60.4 445.5 L69.2 443.3 L78.0 440.8 L88.0 439.5 L98.0 438.2 L108.0 436.4 L118.2 433.8 L128.0 431.7 L134.0 430.3 L140.0 428.6 L145.0 425.5 L151.0 420.0 L155.0 416.0 L161.7 409.6 L170.0 398.5 L178.1 388.2 L189.4 375.6 L199.4 366.8 L205.7 362.0 L212.0 356.6 L219.6 348.4 L227.1 340.9 L234.7 336.5 L243.5 333.7 L252.0 333.0 L262.0 331.8 L272.0 330.2 L282.0 328.4 L292.0 325.8 L304.6 323.3 L318.4 322.1 L323.4 321.4 L332.2 319.6 L343.6 315.2 L354.9 310.1 L364.9 305.1 L372.0 302.0 L382.1 296.9 L392.1 291.9 L400.9 285.6 L409.7 280.6 L419.8 277.2 L428.6 276.2 L437.4 276.2 L447.4 274.3 L457.5 273.0 L467.6 271.1 L478.9 269.3 L488.9 268.4 L496.0 268.4 L508.6 268.0 L521.1 266.7 L531.2 267.6 L543.8 271.1 L556.4 274.3 L571.4 278.1 L584.0 281.2 L596.6 285.0 L605.4 286.9 L615.5 289.4 L624.0 291.3 L632.6 292.6 L645.1 295.4 L657.7 300.4 L667.8 304.2 L680.4 306.1 L695.4 306.7 L701.7 307.7 L712.0 308.0 L720.0 306.6 L726.3 309.9 L735.1 310.7 L743.9 310.4 L751.4 308.9 L757.7 309.1 L767.8 310.1 L775.3 312.0 L781.6 312.9" fill="none" stroke="#00e000" stroke-width="1.4" stroke-linejoin="round" stroke-linecap="round"/>
<path d="M4.4 415.0 L31.4 421.3 L50.3 424.4 L75.4 427.5 L100.6 431.0 L120.0 432.6 L140.0 433.3 L155.0 432.0 L175.0 427.0 L195.0 422.6 L212.5 418.8 L232.0 413.0 L256.0 405.0 L290.0 392.0 L330.0 376.0 L363.5 362.5 L385.0 351.0 L406.0 340.0 L436.0 327.5 L468.5 312.5 L481.4 308.0 L496.0 302.0 L514.9 298.2 L533.7 294.4 L552.6 291.9 L571.4 289.4 L590.3 287.5 L609.2 286.2 L624.0 285.2 L640.0 284.2 L655.0 283.9 L670.0 284.3 L690.0 285.6 L712.0 287.8 L735.0 290.6 L755.0 293.4 L768.0 295.4 L780.0 297.2" fill="none" stroke="#00909c" stroke-width="1.0" stroke-linejoin="round" stroke-linecap="round"/>
<line x1="4" x2="983.4" y1="32.5" y2="32.5" stroke="#b0b0b0" stroke-width="0.7" stroke-dasharray="1.6 1.6"/>
<rect x="4" y="33" width="979.4" height="2" fill="#00e0e0"/>
<rect x="4" y="54.2" width="979.4" height="2" fill="#00e0e0"/>
<rect x="4" y="76" width="979.4" height="1" fill="#525860"/>
<rect x="4" y="89.4" width="979.4" height="2" fill="#00e0e0"/>
<rect x="4" y="120.4" width="979.4" height="1.7" fill="#720072"/>
<line x1="231.1" x2="231.1" y1="5" y2="216" stroke="#747474" stroke-width="0.9" stroke-dasharray="1.4 1.6"/>
<line x1="838.6" x2="838.6" y1="5" y2="227" stroke="#a800a8" stroke-width="0.9" stroke-dasharray="1.4 1.8"/>
<rect x="4" y="226.8" width="979.4" height="0.9" fill="#c4c4c4"/>
<rect x="983" y="5" width="1" height="222.5" fill="#d8d8d8"/>
<rect x="4" y="271.9" width="979.4" height="2" fill="#00e0e0"/>
<rect x="4" y="293" width="979.4" height="2" fill="#00e0e0"/>
<rect x="4" y="304" width="979.4" height="2" fill="#00dd00"/>
<rect x="4" y="314.6" width="979.4" height="1" fill="#525860"/>
<rect x="4" y="327.8" width="979.4" height="2" fill="#00e0e0"/>
<rect x="4" y="359.4" width="979.4" height="1.7" fill="#720072"/>
<line x1="4" x2="983.4" y1="423.6" y2="423.6" stroke="#808080" stroke-width="0.9" stroke-dasharray="1.4 1.6"/>
<line x1="571.8" x2="571.8" y1="244" y2="451" stroke="#747474" stroke-width="0.9" stroke-dasharray="1.4 1.6"/>
<rect x="4" y="462" width="979.4" height="0.9" fill="#c4c4c4"/>
<rect x="983" y="243" width="1" height="220" fill="#d8d8d8"/>
<path d="M752.0 45.2 L868.0 91.0" fill="none" stroke="#00b8c0" stroke-width="0.8" stroke-linejoin="round" stroke-linecap="round"/>
<path d="M640.0 283.2 L983.0 316.2" fill="none" stroke="#00a0ac" stroke-width="0.9" stroke-linejoin="round" stroke-linecap="round"/>
<path d="M560.9 213.3 C561.3 212.7 566.0 206.3 567.0 205.0 C568.0 203.7 573.2 196.5 574.1 195.7 C575.0 194.9 578.4 194.2 579.1 194.7 C579.8 195.2 583.2 201.7 584.0 203.0 C584.8 204.3 589.0 213.0 589.8 212.7 C590.6 212.4 594.4 201.5 595.5 199.5 C596.6 197.5 603.1 185.5 604.3 185.0 C605.5 184.5 611.7 193.2 612.4 192.6 C613.1 192.0 613.4 178.3 613.7 176.9 C614.0 175.5 616.0 174.5 616.2 173.1 C616.4 171.7 616.7 159.8 616.8 158.0 C616.9 156.2 617.3 149.9 617.6 148.0 C617.9 146.1 620.3 133.7 620.7 132.0 C621.1 130.3 623.1 126.8 623.3 125.3 C623.5 123.8 623.1 113.1 623.3 111.5 C623.5 109.9 625.5 105.7 625.8 104.0 C626.1 102.3 626.7 90.9 627.0 88.9 C627.3 86.9 629.1 76.7 629.5 76.3 C629.9 75.9 632.6 82.4 632.9 83.8 C633.2 85.2 633.6 93.4 634.0 95.1 C634.4 96.8 637.4 104.8 637.7 106.5 C638.0 108.2 638.1 118.3 638.4 118.4 C638.7 118.5 640.8 109.5 641.5 107.7 C642.2 105.9 647.8 96.0 648.4 93.9 C649.0 91.8 649.2 79.6 649.7 78.8 C650.2 78.0 654.4 82.0 655.3 82.6 C656.2 83.2 661.0 87.9 661.6 87.6 C662.2 87.3 662.4 80.1 662.9 78.8 C663.4 77.5 667.3 71.8 667.9 70.0 C668.5 68.2 670.4 56.8 670.8 54.5 C671.2 52.2 673.6 40.1 674.0 38.2 C674.4 36.3 676.0 28.8 676.5 28.7 C677.0 28.6 679.7 35.5 680.2 36.9 C680.7 38.3 682.4 48.4 682.8 48.2 C683.2 48.0 685.5 36.3 685.9 34.4 C686.3 32.5 688.0 23.2 688.4 21.8 C688.8 20.4 690.5 15.3 690.9 15.5 C691.3 15.7 692.9 22.6 693.4 24.3 C693.9 26.0 696.6 38.2 697.2 38.8 C697.8 39.4 700.8 33.6 701.6 32.5 C702.4 31.4 707.1 25.4 707.9 24.3 C708.7 23.2 711.5 17.0 711.9 17.4 C712.3 17.8 713.4 27.4 713.6 29.4 C713.8 31.4 713.9 42.5 714.2 44.5 C714.5 46.5 716.8 55.9 717.3 56.4 C717.8 56.9 720.6 52.8 721.7 52.0 C722.8 51.2 731.4 45.6 732.4 45.7 C733.4 45.8 734.6 51.6 735.0 53.1 C735.4 54.6 737.7 63.9 738.2 65.7 C738.7 67.5 740.8 76.7 741.3 78.2 C741.8 79.7 744.5 85.0 745.1 85.8 C745.7 86.6 749.0 90.1 749.5 89.6 C750.0 89.1 751.7 80.8 752.0 79.5 C752.3 78.2 753.5 72.8 753.9 72.0 C754.3 71.2 756.5 69.0 757.0 68.2 C757.5 67.4 759.8 61.5 760.2 60.6 C760.6 59.7 762.6 56.4 763.0 56.6 C763.4 56.8 764.8 61.5 765.0 63.2 C765.2 64.9 765.6 77.9 765.8 79.5 C766.0 81.1 766.7 85.1 767.1 85.2 C767.5 85.3 770.7 81.5 771.5 80.8 C772.3 80.1 777.9 75.5 778.4 75.1" fill="none" stroke="#f6f600" stroke-width="2.0" stroke-linejoin="round" stroke-linecap="round"/>
<path d="M778.4 75.1 C779.4 75.2 782.5 74.8 784.1 75.7 C785.7 76.7 786.6 79.0 787.8 80.8 C788.9 82.6 789.7 85.7 791.0 86.4 C792.3 87.1 794.0 86.1 795.4 85.2 C796.8 84.3 798.1 82.3 799.2 80.8 C800.4 79.3 801.0 77.2 802.3 76.4 C803.5 75.6 805.3 75.0 806.7 75.7 C808.1 76.4 809.0 79.1 810.5 80.8 C812.0 82.5 814.1 84.6 815.5 85.8 C816.9 87.0 817.4 87.8 818.6 87.7 C819.9 87.6 821.4 86.2 823.0 85.2 C824.6 84.2 826.2 82.0 828.1 81.4 C830.0 80.8 832.7 80.9 834.4 81.4 C836.1 81.9 836.6 82.9 838.1 84.5 C839.6 86.1 841.5 88.2 843.2 90.8 C844.9 93.4 846.2 96.6 848.2 100.0 C850.2 103.4 852.7 107.5 855.0 111.0 C857.3 114.5 860.8 119.3 862.0 121.0" fill="none" stroke="#00e4e4" stroke-width="2.0" stroke-linejoin="round" stroke-linecap="round"/>
<path d="M408.5 254.2 C409.1 254.6 418.7 262.1 419.8 263.0 C420.9 263.9 429.0 271.1 429.8 271.8 C430.6 272.5 435.5 277.3 436.1 277.4 C436.7 277.5 441.6 274.5 442.4 274.3 C443.2 274.1 451.6 273.2 452.5 273.0 C453.4 272.8 459.2 271.4 460.0 271.1 C460.8 270.8 467.9 267.2 468.8 266.7 C469.7 266.2 477.9 262.1 478.9 261.7 C479.9 261.3 488.4 258.8 488.9 258.6" fill="none" stroke="#f6f600" stroke-width="2.1" stroke-linejoin="round" stroke-linecap="round"/>
<path d="M488.9 258.6 C489.3 258.4 497.0 255.0 497.7 254.8 C498.4 254.6 501.9 254.7 502.5 255.2 C503.1 255.7 508.4 263.5 509.0 264.3 C509.6 265.1 514.6 270.6 515.5 271.6 C516.4 272.6 526.0 282.9 526.9 284.0 C527.8 285.1 533.2 292.7 533.7 293.2 C534.2 293.7 536.7 293.6 537.5 293.5 C538.3 293.4 547.5 291.0 548.8 290.6 C550.1 290.2 562.5 286.6 563.9 286.2 C565.3 285.8 575.4 283.4 576.5 283.1 C577.6 282.8 585.7 280.8 586.5 280.6 C587.3 280.4 591.3 278.2 591.8 278.4 C592.3 278.6 596.0 284.4 596.6 285.0 C597.2 285.6 602.1 290.7 602.9 291.3 C603.7 291.9 610.8 297.0 611.7 297.6 C612.6 298.2 619.0 302.4 620.0 302.9 C621.0 303.4 631.3 307.4 632.6 308.0 C633.9 308.6 644.0 314.3 645.1 314.9 C646.2 315.5 653.1 319.9 654.0 320.5 C654.9 321.1 661.9 327.4 662.8 327.4 C663.7 327.4 671.7 321.9 672.8 321.2 C673.9 320.5 684.3 314.9 685.4 314.2 C686.5 313.5 694.5 307.4 695.4 306.7 C696.3 306.0 702.1 300.4 703.0 299.8 C703.9 299.2 712.2 294.4 713.0 294.7 C713.8 295.0 718.7 304.5 719.3 305.4 C719.9 306.3 723.9 312.2 724.4 313.0 C724.9 313.8 728.9 320.5 729.4 321.2 C729.9 321.9 733.6 326.3 733.8 326.6" fill="none" stroke="#f6f600" stroke-width="2.1" stroke-linejoin="round" stroke-linecap="round"/>
<path d="M499.5 254.6 C499.2 254.8 497.2 255.6 496.9 256.4 C496.6 257.2 496.9 259.0 497.3 260.3 C497.7 261.6 499.0 264.6 500.1 266.0 C501.2 267.4 505.0 270.2 505.8 270.8" fill="none" stroke="#f6f600" stroke-width="2.1" stroke-linejoin="round" stroke-linecap="round"/>
<path d="M499.20000000000005 117.6 H504.0 V125.6 H507.20000000000005 L501.6 131.6 L496.0 125.6 H499.20000000000005 Z" fill="none" stroke="#e000e0" stroke-width="1.1" stroke-linejoin="miter"/>
<path d="M717.5 13.2 H722.3 V21.2 H725.5 L719.9 27.2 L714.3 21.2 H717.5 Z" fill="none" stroke="#e000e0" stroke-width="1.1" stroke-linejoin="miter"/>
<path d="M525.5 251.4 H530.3 V259.4 H533.5 L527.9 265.4 L522.3 259.4 H525.5 Z" fill="none" stroke="#e000e0" stroke-width="1.1" stroke-linejoin="miter"/>
<path d="M374.9 173.6 L380.6 179.4 H377.6 V187.2 H372.4 V179.4 H369.2 Z" fill="none" stroke="#00d4dc" stroke-width="1.1"/>
<path d="M229.2 23.4 L237.8 31.8 M236.8 25.4 L232 29.4" stroke="#00b0b0" stroke-width="1.3" fill="none"/>
<path d="M234 24.6 l2.6 2.8 M235.4 23.8 l0 4.4" stroke="#00b0b0" stroke-width="0.8" fill="none"/>
<ellipse cx="230.6" cy="30.2" rx="1.3" ry="1.7" fill="none" stroke="#00b0b0" stroke-width="0.9"/>
<path d="M571.9 415.1 L581 423.3 M579.5 416.9 L572.2 422.7" stroke="#d4d400" stroke-width="2.1" stroke-linecap="round" fill="none"/>
<path d="M783.4 3.2 h6.8 l-3.4 3.6 z" fill="#8a94a0"/>
<path d="M782.4 242.6 h6.8 l-3.4 3.6 z" fill="#8a94a0"/>
<rect x="3.5" y="226.0" width="1" height="3.5" fill="#d8d8d8"/>
<rect x="3.5" y="461.2" width="1" height="3.5" fill="#d8d8d8"/>
<rect x="38.4" y="226.0" width="1" height="1.8" fill="#d8d8d8"/>
<rect x="38.4" y="461.2" width="1" height="1.8" fill="#d8d8d8"/>
<rect x="73.4" y="226.0" width="1" height="3.5" fill="#d8d8d8"/>
<rect x="73.4" y="461.2" width="1" height="3.5" fill="#d8d8d8"/>
<rect x="108.3" y="226.0" width="1" height="1.8" fill="#d8d8d8"/>
<rect x="108.3" y="461.2" width="1" height="1.8" fill="#d8d8d8"/>
<rect x="143.3" y="226.0" width="1" height="3.5" fill="#d8d8d8"/>
<rect x="143.3" y="461.2" width="1" height="3.5" fill="#d8d8d8"/>
<rect x="178.2" y="226.0" width="1" height="1.8" fill="#d8d8d8"/>
<rect x="178.2" y="461.2" width="1" height="1.8" fill="#d8d8d8"/>
<rect x="213.1" y="226.0" width="1" height="3.5" fill="#d8d8d8"/>
<rect x="213.1" y="461.2" width="1" height="3.5" fill="#d8d8d8"/>
<rect x="248.1" y="226.0" width="1" height="1.8" fill="#d8d8d8"/>
<rect x="248.1" y="461.2" width="1" height="1.8" fill="#d8d8d8"/>
<rect x="283.0" y="226.0" width="1" height="3.5" fill="#d8d8d8"/>
<rect x="283.0" y="461.2" width="1" height="3.5" fill="#d8d8d8"/>
<rect x="318.0" y="226.0" width="1" height="1.8" fill="#d8d8d8"/>
<rect x="318.0" y="461.2" width="1" height="1.8" fill="#d8d8d8"/>
<rect x="352.9" y="226.0" width="1" height="3.5" fill="#d8d8d8"/>
<rect x="352.9" y="461.2" width="1" height="3.5" fill="#d8d8d8"/>
<rect x="387.8" y="226.0" width="1" height="1.8" fill="#d8d8d8"/>
<rect x="387.8" y="461.2" width="1" height="1.8" fill="#d8d8d8"/>
<rect x="422.8" y="226.0" width="1" height="3.5" fill="#d8d8d8"/>
<rect x="422.8" y="461.2" width="1" height="3.5" fill="#d8d8d8"/>
<rect x="457.7" y="226.0" width="1" height="1.8" fill="#d8d8d8"/>
<rect x="457.7" y="461.2" width="1" height="1.8" fill="#d8d8d8"/>
<rect x="492.7" y="226.0" width="1" height="3.5" fill="#d8d8d8"/>
<rect x="492.7" y="461.2" width="1" height="3.5" fill="#d8d8d8"/>
<rect x="527.6" y="226.0" width="1" height="1.8" fill="#d8d8d8"/>
<rect x="527.6" y="461.2" width="1" height="1.8" fill="#d8d8d8"/>
<rect x="562.5" y="226.0" width="1" height="3.5" fill="#d8d8d8"/>
<rect x="562.5" y="461.2" width="1" height="3.5" fill="#d8d8d8"/>
<rect x="597.5" y="226.0" width="1" height="1.8" fill="#d8d8d8"/>
<rect x="597.5" y="461.2" width="1" height="1.8" fill="#d8d8d8"/>
<rect x="632.4" y="226.0" width="1" height="3.5" fill="#d8d8d8"/>
<rect x="632.4" y="461.2" width="1" height="3.5" fill="#d8d8d8"/>
<rect x="667.4" y="226.0" width="1" height="1.8" fill="#d8d8d8"/>
<rect x="667.4" y="461.2" width="1" height="1.8" fill="#d8d8d8"/>
<rect x="702.3" y="226.0" width="1" height="3.5" fill="#d8d8d8"/>
<rect x="702.3" y="461.2" width="1" height="3.5" fill="#d8d8d8"/>
<rect x="737.2" y="226.0" width="1" height="1.8" fill="#d8d8d8"/>
<rect x="737.2" y="461.2" width="1" height="1.8" fill="#d8d8d8"/>
<rect x="772.2" y="226.0" width="1" height="3.5" fill="#d8d8d8"/>
<rect x="772.2" y="461.2" width="1" height="3.5" fill="#d8d8d8"/>
<text x="3.6" y="224.3" font-size="8.4" fill="#dcdcdc" text-anchor="start" textLength="31.7" lengthAdjust="spacingAndGlyphs">2025/9/2</text>
<text x="38.339999999999996" y="224.3" font-size="8.4" fill="#dcdcdc" text-anchor="start" textLength="19.9" lengthAdjust="spacingAndGlyphs">22:00</text>
<text x="73.28" y="224.3" font-size="8.4" fill="#dcdcdc" text-anchor="start" textLength="19.9" lengthAdjust="spacingAndGlyphs">06:00</text>
<text x="108.22" y="224.3" font-size="8.4" fill="#dcdcdc" text-anchor="start" textLength="19.9" lengthAdjust="spacingAndGlyphs">14:00</text>
<text x="143.16" y="224.3" font-size="8.4" fill="#dcdcdc" text-anchor="start" textLength="19.9" lengthAdjust="spacingAndGlyphs">22:00</text>
<text x="178.1" y="224.3" font-size="8.4" fill="#dcdcdc" text-anchor="start" textLength="19.9" lengthAdjust="spacingAndGlyphs">06:00</text>
<text x="213.04" y="224.3" font-size="8.4" fill="#dcdcdc" text-anchor="start" textLength="19.9" lengthAdjust="spacingAndGlyphs">14:00</text>
<text x="247.98" y="224.3" font-size="8.4" fill="#dcdcdc" text-anchor="start" textLength="19.9" lengthAdjust="spacingAndGlyphs">22:00</text>
<text x="282.91999999999996" y="224.3" font-size="8.4" fill="#dcdcdc" text-anchor="start" textLength="19.9" lengthAdjust="spacingAndGlyphs">06:00</text>
<text x="317.85999999999996" y="224.3" font-size="8.4" fill="#dcdcdc" text-anchor="start" textLength="19.9" lengthAdjust="spacingAndGlyphs">14:00</text>
<text x="352.79999999999995" y="224.3" font-size="8.4" fill="#dcdcdc" text-anchor="start" textLength="19.9" lengthAdjust="spacingAndGlyphs">22:00</text>
<text x="387.73999999999995" y="224.3" font-size="8.4" fill="#dcdcdc" text-anchor="start" textLength="19.9" lengthAdjust="spacingAndGlyphs">06:00</text>
<text x="422.67999999999995" y="224.3" font-size="8.4" fill="#dcdcdc" text-anchor="start" textLength="19.9" lengthAdjust="spacingAndGlyphs">14:00</text>
<text x="457.61999999999995" y="224.3" font-size="8.4" fill="#dcdcdc" text-anchor="start" textLength="19.9" lengthAdjust="spacingAndGlyphs">22:00</text>
<text x="492.55999999999995" y="224.3" font-size="8.4" fill="#dcdcdc" text-anchor="start" textLength="19.9" lengthAdjust="spacingAndGlyphs">06:00</text>
<text x="527.4999999999999" y="224.3" font-size="8.4" fill="#dcdcdc" text-anchor="start" textLength="19.9" lengthAdjust="spacingAndGlyphs">14:00</text>
<text x="562.4399999999999" y="224.3" font-size="8.4" fill="#dcdcdc" text-anchor="start" textLength="19.9" lengthAdjust="spacingAndGlyphs">22:00</text>
<text x="597.38" y="224.3" font-size="8.4" fill="#dcdcdc" text-anchor="start" textLength="19.9" lengthAdjust="spacingAndGlyphs">06:00</text>
<text x="632.3199999999999" y="224.3" font-size="8.4" fill="#dcdcdc" text-anchor="start" textLength="19.9" lengthAdjust="spacingAndGlyphs">14:00</text>
<text x="667.2599999999999" y="224.3" font-size="8.4" fill="#dcdcdc" text-anchor="start" textLength="19.9" lengthAdjust="spacingAndGlyphs">22:00</text>
<text x="702.1999999999999" y="224.3" font-size="8.4" fill="#dcdcdc" text-anchor="start" textLength="19.9" lengthAdjust="spacingAndGlyphs">06:00</text>
<text x="737.14" y="224.3" font-size="8.4" fill="#dcdcdc" text-anchor="start" textLength="19.9" lengthAdjust="spacingAndGlyphs">14:00</text>
<text x="772.0799999999999" y="224.3" font-size="8.4" fill="#dcdcdc" text-anchor="start" textLength="19.9" lengthAdjust="spacingAndGlyphs">22:00</text>
<text x="3.4" y="236.8" font-size="8.4" fill="#dcdcdc" text-anchor="start" textLength="39.2" lengthAdjust="spacingAndGlyphs">2 Sep 2025</text>
<text x="73.28" y="236.8" font-size="8.4" fill="#dcdcdc" text-anchor="start" textLength="42.0" lengthAdjust="spacingAndGlyphs">5 Sep 00:00</text>
<text x="143.16" y="236.8" font-size="8.4" fill="#dcdcdc" text-anchor="start" textLength="42.0" lengthAdjust="spacingAndGlyphs">9 Sep 16:00</text>
<text x="213.04" y="236.8" font-size="8.4" fill="#dcdcdc" text-anchor="start" textLength="46.3" lengthAdjust="spacingAndGlyphs">12 Sep 08:00</text>
<text x="282.91999999999996" y="236.8" font-size="8.4" fill="#dcdcdc" text-anchor="start" textLength="46.3" lengthAdjust="spacingAndGlyphs">17 Sep 00:00</text>
<text x="352.79999999999995" y="236.8" font-size="8.4" fill="#dcdcdc" text-anchor="start" textLength="46.3" lengthAdjust="spacingAndGlyphs">19 Sep 16:00</text>
<text x="422.67999999999995" y="236.8" font-size="8.4" fill="#dcdcdc" text-anchor="start" textLength="46.3" lengthAdjust="spacingAndGlyphs">24 Sep 08:00</text>
<text x="492.55999999999995" y="236.8" font-size="8.4" fill="#dcdcdc" text-anchor="start" textLength="46.3" lengthAdjust="spacingAndGlyphs">29 Sep 00:00</text>
<text x="562.4399999999999" y="236.8" font-size="8.4" fill="#dcdcdc" text-anchor="start" textLength="40.9" lengthAdjust="spacingAndGlyphs">1 Oct 16:00</text>
<text x="632.3199999999999" y="236.8" font-size="8.4" fill="#dcdcdc" text-anchor="start" textLength="40.9" lengthAdjust="spacingAndGlyphs">6 Oct 08:00</text>
<text x="702.1999999999999" y="236.8" font-size="8.4" fill="#dcdcdc" text-anchor="start" textLength="40.9" lengthAdjust="spacingAndGlyphs">9 Oct 00:00</text>
<text x="772.0799999999999" y="236.8" font-size="8.4" fill="#dcdcdc" text-anchor="start" textLength="45.2" lengthAdjust="spacingAndGlyphs">13 Oct 16:00</text>
<text x="3.6" y="458.6" font-size="8.4" fill="#dcdcdc" text-anchor="start" textLength="36.0" lengthAdjust="spacingAndGlyphs">2025/10/2</text>
<text x="38.339999999999996" y="458.6" font-size="8.4" fill="#dcdcdc" text-anchor="start" textLength="19.9" lengthAdjust="spacingAndGlyphs">06:00</text>
<text x="73.28" y="458.6" font-size="8.4" fill="#dcdcdc" text-anchor="start" textLength="19.9" lengthAdjust="spacingAndGlyphs">14:00</text>
<text x="108.22" y="458.6" font-size="8.4" fill="#dcdcdc" text-anchor="start" textLength="19.9" lengthAdjust="spacingAndGlyphs">22:00</text>
<text x="143.16" y="458.6" font-size="8.4" fill="#dcdcdc" text-anchor="start" textLength="19.9" lengthAdjust="spacingAndGlyphs">06:00</text>
<text x="178.1" y="458.6" font-size="8.4" fill="#dcdcdc" text-anchor="start" textLength="19.9" lengthAdjust="spacingAndGlyphs">14:00</text>
<text x="213.04" y="458.6" font-size="8.4" fill="#dcdcdc" text-anchor="start" textLength="19.9" lengthAdjust="spacingAndGlyphs">22:00</text>
<text x="247.98" y="458.6" font-size="8.4" fill="#dcdcdc" text-anchor="start" textLength="19.9" lengthAdjust="spacingAndGlyphs">06:00</text>
<text x="282.91999999999996" y="458.6" font-size="8.4" fill="#dcdcdc" text-anchor="start" textLength="19.9" lengthAdjust="spacingAndGlyphs">14:00</text>
<text x="317.85999999999996" y="458.6" font-size="8.4" fill="#dcdcdc" text-anchor="start" textLength="19.9" lengthAdjust="spacingAndGlyphs">22:00</text>
<text x="352.79999999999995" y="458.6" font-size="8.4" fill="#dcdcdc" text-anchor="start" textLength="19.9" lengthAdjust="spacingAndGlyphs">06:00</text>
<text x="387.73999999999995" y="458.6" font-size="8.4" fill="#dcdcdc" text-anchor="start" textLength="19.9" lengthAdjust="spacingAndGlyphs">14:00</text>
<text x="422.67999999999995" y="458.6" font-size="8.4" fill="#dcdcdc" text-anchor="start" textLength="19.9" lengthAdjust="spacingAndGlyphs">22:00</text>
<text x="457.61999999999995" y="458.6" font-size="8.4" fill="#dcdcdc" text-anchor="start" textLength="19.9" lengthAdjust="spacingAndGlyphs">06:00</text>
<text x="492.55999999999995" y="458.6" font-size="8.4" fill="#dcdcdc" text-anchor="start" textLength="19.9" lengthAdjust="spacingAndGlyphs">14:00</text>
<text x="527.4999999999999" y="458.6" font-size="8.4" fill="#dcdcdc" text-anchor="start" textLength="19.9" lengthAdjust="spacingAndGlyphs">22:00</text>
<text x="562.4399999999999" y="458.6" font-size="8.4" fill="#dcdcdc" text-anchor="start" textLength="19.9" lengthAdjust="spacingAndGlyphs">06:00</text>
<text x="597.38" y="458.6" font-size="8.4" fill="#dcdcdc" text-anchor="start" textLength="19.9" lengthAdjust="spacingAndGlyphs">14:00</text>
<text x="632.3199999999999" y="458.6" font-size="8.4" fill="#dcdcdc" text-anchor="start" textLength="19.9" lengthAdjust="spacingAndGlyphs">22:00</text>
<text x="667.2599999999999" y="458.6" font-size="8.4" fill="#dcdcdc" text-anchor="start" textLength="19.9" lengthAdjust="spacingAndGlyphs">06:00</text>
<text x="702.1999999999999" y="458.6" font-size="8.4" fill="#dcdcdc" text-anchor="start" textLength="19.9" lengthAdjust="spacingAndGlyphs">14:00</text>
<text x="737.14" y="458.6" font-size="8.4" fill="#dcdcdc" text-anchor="start" textLength="19.9" lengthAdjust="spacingAndGlyphs">22:00</text>
<text x="772.0799999999999" y="458.6" font-size="8.4" fill="#dcdcdc" text-anchor="start" textLength="19.9" lengthAdjust="spacingAndGlyphs">06:00</text>
<text x="3.4" y="472.3" font-size="8.4" fill="#dcdcdc" text-anchor="start" textLength="38.2" lengthAdjust="spacingAndGlyphs">2 Oct 2025</text>
<text x="73.28" y="472.3" font-size="8.4" fill="#dcdcdc" text-anchor="start" textLength="40.9" lengthAdjust="spacingAndGlyphs">3 Oct 08:00</text>
<text x="143.16" y="472.3" font-size="8.4" fill="#dcdcdc" text-anchor="start" textLength="40.9" lengthAdjust="spacingAndGlyphs">6 Oct 00:00</text>
<text x="213.04" y="472.3" font-size="8.4" fill="#dcdcdc" text-anchor="start" textLength="40.9" lengthAdjust="spacingAndGlyphs">6 Oct 16:00</text>
<text x="282.91999999999996" y="472.3" font-size="8.4" fill="#dcdcdc" text-anchor="start" textLength="40.9" lengthAdjust="spacingAndGlyphs">7 Oct 08:00</text>
<text x="352.79999999999995" y="472.3" font-size="8.4" fill="#dcdcdc" text-anchor="start" textLength="40.9" lengthAdjust="spacingAndGlyphs">8 Oct 00:00</text>
<text x="422.67999999999995" y="472.3" font-size="8.4" fill="#dcdcdc" text-anchor="start" textLength="40.9" lengthAdjust="spacingAndGlyphs">8 Oct 16:00</text>
<text x="492.55999999999995" y="472.3" font-size="8.4" fill="#dcdcdc" text-anchor="start" textLength="40.9" lengthAdjust="spacingAndGlyphs">9 Oct 08:00</text>
<text x="562.4399999999999" y="472.3" font-size="8.4" fill="#dcdcdc" text-anchor="start" textLength="45.2" lengthAdjust="spacingAndGlyphs">10 Oct 00:00</text>
<text x="632.3199999999999" y="472.3" font-size="8.4" fill="#dcdcdc" text-anchor="start" textLength="45.2" lengthAdjust="spacingAndGlyphs">10 Oct 16:00</text>
<text x="702.1999999999999" y="472.3" font-size="8.4" fill="#dcdcdc" text-anchor="start" textLength="45.2" lengthAdjust="spacingAndGlyphs">13 Oct 08:00</text>
<text x="772.0799999999999" y="472.3" font-size="8.4" fill="#dcdcdc" text-anchor="start" textLength="45.2" lengthAdjust="spacingAndGlyphs">14 Oct 00:00</text>
<rect x="198" y="216" width="65.80000000000001" height="9.400000000000006" fill="#b4b4b4"/>
<text x="200.6" y="223.20000000000002" font-size="8.4" fill="#262626" text-anchor="start" textLength="60.60000000000001" lengthAdjust="spacingAndGlyphs">2025.09.15 06:00</text>
<rect x="197" y="229.4" width="66.80000000000001" height="9.400000000000006" fill="#b4b4b4"/>
<text x="199.6" y="236.60000000000002" font-size="8.4" fill="#262626" text-anchor="start" textLength="61.60000000000001" lengthAdjust="spacingAndGlyphs">2025.09.15 00:00</text>
<rect x="539" y="451" width="65.39999999999998" height="9.600000000000023" fill="#b4b4b4"/>
<text x="541.6" y="458.40000000000003" font-size="8.4" fill="#262626" text-anchor="start" textLength="60.199999999999974" lengthAdjust="spacingAndGlyphs">2025.10.10 08:00</text>
<rect x="537.6" y="464.8" width="66.79999999999995" height="9.399999999999977" fill="#b4b4b4"/>
<text x="540.2" y="472.0" font-size="8.4" fill="#262626" text-anchor="start" textLength="61.59999999999995" lengthAdjust="spacingAndGlyphs">2025.10.10 02:00</text>
<path d="M5.2 6.9 h6.4 l-3.2 3.6 z" fill="#f0f0f0"/>
<text x="15.6" y="12" font-size="8.4" fill="#f0f0f0" text-anchor="start" textLength="43" lengthAdjust="spacingAndGlyphs">EURJPY#,H4</text>
<text x="63.5" y="12" font-size="8.4" fill="#f0f0f0" text-anchor="start" textLength="119.2" lengthAdjust="spacingAndGlyphs">176.007 176.228 176.007 176.182</text>
<path d="M5.2 245.1 h6.4 l-3.2 3.6 z" fill="#f0f0f0"/>
<text x="15.6" y="249.6" font-size="8.4" fill="#f0f0f0" text-anchor="start" textLength="43" lengthAdjust="spacingAndGlyphs">EURJPY#,H1</text>
<text x="63.5" y="249.6" font-size="8.4" fill="#f0f0f0" text-anchor="start" textLength="119.2" lengthAdjust="spacingAndGlyphs">176.219 176.224 176.161 176.182</text>
<text x="875.4" y="21.7" font-size="17.8" fill="#f2f2f2" text-anchor="start" textLength="76.6" lengthAdjust="spacingAndGlyphs" stroke="#000" stroke-width="0.12">EURJPY#</text>
<text x="960.2" y="21.7" font-size="17.8" fill="#f2f2f2" text-anchor="start" textLength="21.8" lengthAdjust="spacingAndGlyphs" stroke="#000" stroke-width="0.12">H4</text>
<text x="875.4" y="259.0" font-size="17.8" fill="#f2f2f2" text-anchor="start" textLength="76.6" lengthAdjust="spacingAndGlyphs" stroke="#000" stroke-width="0.12">EURJPY#</text>
<text x="960.2" y="259.0" font-size="17.8" fill="#f2f2f2" text-anchor="start" textLength="21.8" lengthAdjust="spacingAndGlyphs" stroke="#000" stroke-width="0.12">H1</text>
<rect x="983.4" y="31.700000000000003" width="2.2" height="1" fill="#d8d8d8"/>
<text x="987.6" y="35.0" font-size="8.4" fill="#e8e8e8" text-anchor="start" textLength="27.6" lengthAdjust="spacingAndGlyphs">177.460</text>
<rect x="983.4" y="65.1" width="2.2" height="1" fill="#d8d8d8"/>
<text x="987.6" y="68.39999999999999" font-size="8.4" fill="#e8e8e8" text-anchor="start" textLength="27.6" lengthAdjust="spacingAndGlyphs">176.470</text>
<rect x="983.4" y="101.1" width="2.2" height="1" fill="#d8d8d8"/>
<text x="987.6" y="104.39999999999999" font-size="8.4" fill="#e8e8e8" text-anchor="start" textLength="27.6" lengthAdjust="spacingAndGlyphs">175.480</text>
<rect x="983.4" y="136.9" width="2.2" height="1" fill="#d8d8d8"/>
<text x="987.6" y="140.20000000000002" font-size="8.4" fill="#e8e8e8" text-anchor="start" textLength="27.6" lengthAdjust="spacingAndGlyphs">174.490</text>
<rect x="983.4" y="172.7" width="2.2" height="1" fill="#d8d8d8"/>
<text x="987.6" y="176.0" font-size="8.4" fill="#e8e8e8" text-anchor="start" textLength="27.6" lengthAdjust="spacingAndGlyphs">173.485</text>
<rect x="983.4" y="208.5" width="2.2" height="1" fill="#d8d8d8"/>
<text x="987.6" y="211.8" font-size="8.4" fill="#e8e8e8" text-anchor="start" textLength="27.6" lengthAdjust="spacingAndGlyphs">172.495</text>
<rect x="984" y="29.6" width="34" height="9.399999999999999" fill="#00e0e0"/>
<text x="987.6" y="37.4" font-size="8.4" fill="#103030" text-anchor="start" textLength="27.6" lengthAdjust="spacingAndGlyphs">177.366</text>
<rect x="984" y="52" width="34" height="8.399999999999999" fill="#00e0e0"/>
<text x="987.6" y="58.8" font-size="8.4" fill="#103030" text-anchor="start" textLength="27.6" lengthAdjust="spacingAndGlyphs">176.776</text>
<rect x="984" y="72" width="34" height="9" fill="#f4f4f4"/>
<text x="987.6" y="79.4" font-size="8.4" fill="#202020" text-anchor="start" textLength="27.6" lengthAdjust="spacingAndGlyphs">176.182</text>
<rect x="984" y="87" width="34" height="9" fill="#00e0e0"/>
<text x="987.6" y="94.4" font-size="8.4" fill="#103030" text-anchor="start" textLength="27.6" lengthAdjust="spacingAndGlyphs">175.803</text>
<rect x="984" y="117.6" width="34" height="9.0" fill="#f000f0"/>
<text x="987.6" y="125.0" font-size="8.4" fill="#400040" text-anchor="start" textLength="27.6" lengthAdjust="spacingAndGlyphs">174.945</text>
<rect x="983.4" y="265.9" width="2.2" height="1" fill="#d8d8d8"/>
<text x="987.6" y="269.2" font-size="8.4" fill="#e8e8e8" text-anchor="start" textLength="27.6" lengthAdjust="spacingAndGlyphs">177.540</text>
<rect x="983.4" y="301.7" width="2.2" height="1" fill="#d8d8d8"/>
<text x="987.6" y="305.0" font-size="8.4" fill="#e8e8e8" text-anchor="start" textLength="27.6" lengthAdjust="spacingAndGlyphs">176.555</text>
<rect x="983.4" y="337.1" width="2.2" height="1" fill="#d8d8d8"/>
<text x="987.6" y="340.40000000000003" font-size="8.4" fill="#e8e8e8" text-anchor="start" textLength="27.6" lengthAdjust="spacingAndGlyphs">175.575</text>
<rect x="983.4" y="372.7" width="2.2" height="1" fill="#d8d8d8"/>
<text x="987.6" y="376.0" font-size="8.4" fill="#e8e8e8" text-anchor="start" textLength="27.6" lengthAdjust="spacingAndGlyphs">174.600</text>
<rect x="983.4" y="408.1" width="2.2" height="1" fill="#d8d8d8"/>
<text x="987.6" y="411.40000000000003" font-size="8.4" fill="#e8e8e8" text-anchor="start" textLength="27.6" lengthAdjust="spacingAndGlyphs">173.610</text>
<rect x="983.4" y="443.5" width="2.2" height="1" fill="#d8d8d8"/>
<text x="987.6" y="446.8" font-size="8.4" fill="#e8e8e8" text-anchor="start" textLength="27.6" lengthAdjust="spacingAndGlyphs">172.635</text>
<rect x="984" y="269.4" width="34" height="8.600000000000023" fill="#00e0e0"/>
<text x="987.6" y="276.4" font-size="8.4" fill="#103030" text-anchor="start" textLength="27.6" lengthAdjust="spacingAndGlyphs">177.366</text>
<rect x="984" y="290.8" width="34" height="8.800000000000011" fill="#00e0e0"/>
<text x="987.6" y="298.0" font-size="8.4" fill="#103030" text-anchor="start" textLength="27.6" lengthAdjust="spacingAndGlyphs">176.776</text>
<rect x="984" y="302" width="34" height="9" fill="#00dd00"/>
<text x="987.6" y="309.4" font-size="8.4" fill="#003000" text-anchor="start" textLength="27.6" lengthAdjust="spacingAndGlyphs">176.470</text>
<rect x="984" y="311.4" width="34" height="8.800000000000011" fill="#f4f4f4"/>
<text x="987.6" y="318.59999999999997" font-size="8.4" fill="#202020" text-anchor="start" textLength="27.6" lengthAdjust="spacingAndGlyphs">176.182</text>
<rect x="984" y="325.8" width="34" height="8.800000000000011" fill="#00e0e0"/>
<text x="987.6" y="333.0" font-size="8.4" fill="#103030" text-anchor="start" textLength="27.6" lengthAdjust="spacingAndGlyphs">175.803</text>
<rect x="984" y="356.6" width="34" height="9.0" fill="#f000f0"/>
<text x="987.6" y="364.0" font-size="8.4" fill="#400040" text-anchor="start" textLength="27.6" lengthAdjust="spacingAndGlyphs">174.945</text>
<rect x="984" y="419.6" width="34" height="9.0" fill="#b4b4b4"/>
<text x="987.6" y="427.0" font-size="8.4" fill="#303030" text-anchor="start" textLength="27.6" lengthAdjust="spacingAndGlyphs">173.184</text>
<circle cx="994.1" cy="41.2" r="12.6" fill="#000"/>
<path d="M990.9 32 L996.7 32 L1001.3 37.8 L996.5 51.6 L991.1 51.6 L986.3 37.8 Z" fill="#fff"/>
<circle cx="993.8" cy="40.4" r="2.4" fill="#000"/>
<rect x="993.3" y="41.5" width="1" height="10.2" fill="#000"/>
<rect x="980.4" y="61.4" width="27" height="26.6" fill="#38b8e8" stroke="#f8fcff" stroke-width="1.4"/>
<path d="M984.4 75 q9.4 10.4 18.8 0" fill="none" stroke="#1c3c4c" stroke-width="1.15"/>
<path d="M988.6 77.6 q5.2 2.6 10.4 0" fill="none" stroke="#1c3c4c" stroke-width="0.7"/>
<rect x="0" y="477" width="1024" height="16" fill="#f0f0f0"/>
<rect x="172.4" y="477" width="69" height="16" fill="#ffffff"/>
<path d="M0 479.9 H172.4 M93.5 479.9 V493 M172.4 479.9 V493 M241.6 493 V479.9 H388 V493 M311.6 479.9 V493" fill="none" stroke="#858585" stroke-width="1"/>
<text x="13.4" y="490.4" font-size="9" fill="#7a7a7a" text-anchor="start" textLength="69.6" lengthAdjust="spacingAndGlyphs">EURJPY#,Weekly</text>
<text x="102.4" y="490.4" font-size="9" fill="#7a7a7a" text-anchor="start" textLength="60.6" lengthAdjust="spacingAndGlyphs">EURJPY#,Daily</text>
<text x="180.4" y="490.4" font-size="9" fill="#000" text-anchor="start" textLength="52.6" lengthAdjust="spacingAndGlyphs">EURJPY#,H4</text>
<text x="250.8" y="490.4" font-size="9" fill="#7a7a7a" text-anchor="start" textLength="51.4" lengthAdjust="spacingAndGlyphs">EURJPY#,H1</text>
<text x="320.2" y="490.4" font-size="9" fill="#7a7a7a" text-anchor="start" textLength="58.6" lengthAdjust="spacingAndGlyphs">EURJPY#,M15</text>
<path d="M1001.4 484 v4.4 l-2.6 -2.2z M1013.6 484 v4.4 l2.6 -2.2z" fill="#a8a8a8"/>
</svg>
</body></html>
